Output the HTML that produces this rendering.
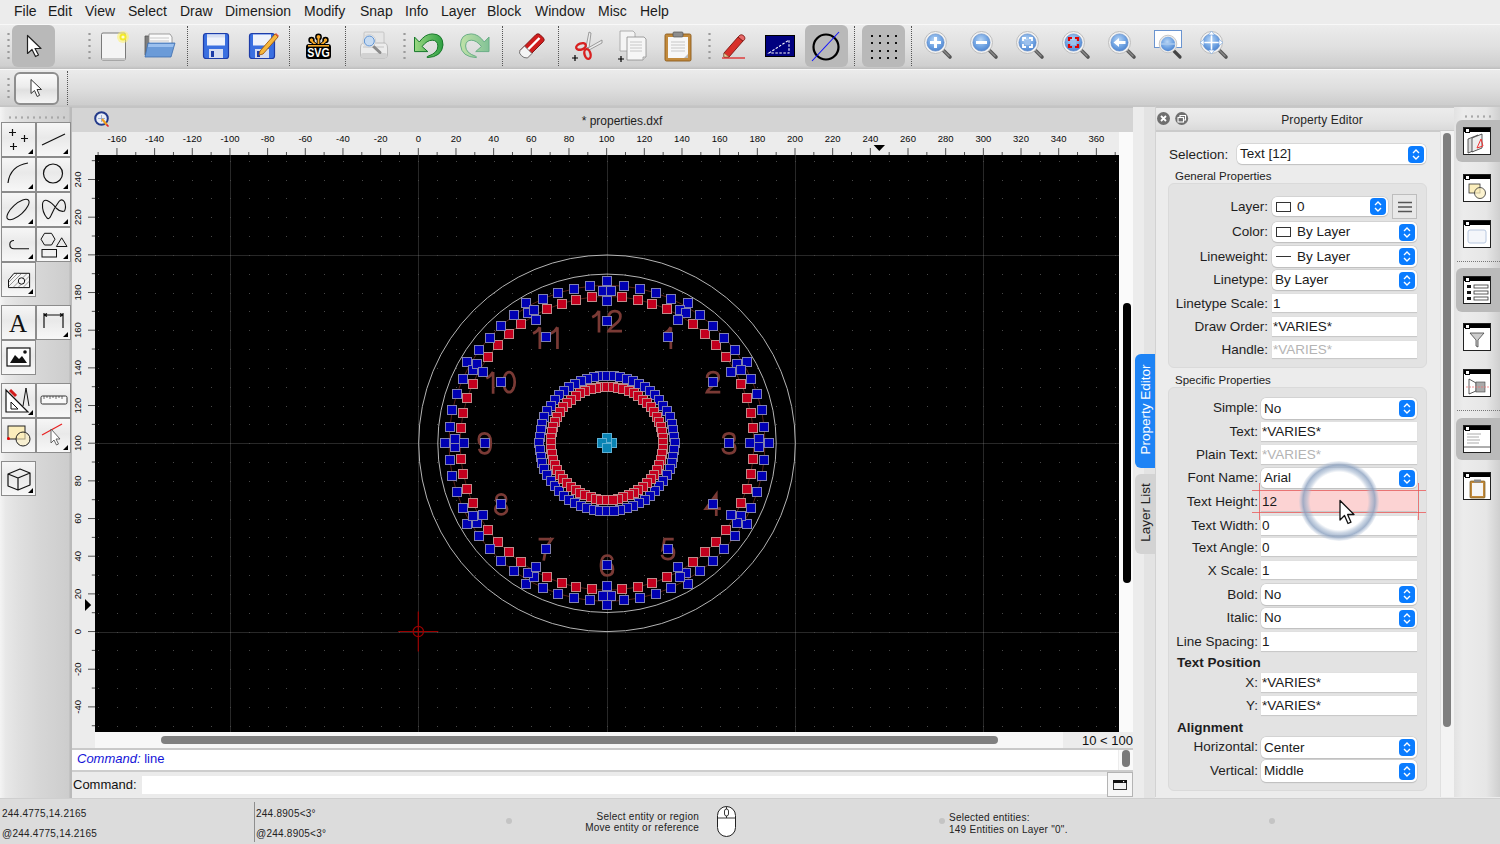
<!DOCTYPE html>
<html><head><meta charset="utf-8">
<style>
*{box-sizing:border-box}
html,body{margin:0;padding:0}
body{width:1500px;height:844px;overflow:hidden;position:relative;background:#ececec;font-family:"Liberation Sans",sans-serif;color:#1d1d1d}
.a{position:absolute}
#menubar{left:0;top:0;width:1500px;height:24px;background:#ececec}
#menubar span{position:absolute;top:3.2px;font-size:14px;color:#1b1b1b;letter-spacing:0}
#tb1{left:0;top:24px;width:1500px;height:45px;background:linear-gradient(#ececec,#e0e0e0 50%,#cfcfcf 93%,#bdbdbd);border-top:1px solid #f8f8f8}
#tb2{left:0;top:69px;width:1500px;height:38px;background:linear-gradient(#ebebeb,#dedede 50%,#cdcdcd 94%,#bababa);border-top:1px solid #f8f8f8}
.sepv{position:absolute;width:1px;border-left:1px dotted #555}
.handle{position:absolute;width:3px;background:radial-gradient(circle,#9a9a9a 1px,transparent 1.3px) 0 0/3px 6px}
.selbg{position:absolute;background:#b9b9b9;border-radius:6px}
#toolbox{left:0;top:106px;width:72px;height:692px;background:linear-gradient(90deg,#f4f4f4 0,#e8e8e8 8%,#e0e0e0 25%,#d6d6d6 55%,#cdcdcd 96%,#bababa 97%,#bababa);border-top:1px solid #c4c4c4}
.tbtn{position:absolute;width:35px;height:35px;border:1px solid #8c8c8c;background:linear-gradient(#f6f6f6,#e9e9e9 45%,#ececec 55%,#f7f7f7)}
.tri{position:absolute;right:2px;bottom:2px;width:0;height:0;border-left:5px solid transparent;border-bottom:5px solid #000}
#doctitle{left:72px;top:106px;width:1062px;height:26px;background:#d4d4d4;border-top:2px solid #c4c4c4}
#status{left:0;width:1500px;background:#dcdcdc;border-top:1px solid #cfcfcf}
.st{position:absolute;font-size:10px;color:#222;white-space:nowrap;letter-spacing:.25px}
.pe-lbl{position:absolute;font-size:13.5px;color:#1e1e1e;text-align:right;white-space:nowrap}
.field{position:absolute;height:19px;background:#fff;border-bottom:1px solid #c9c9c9;font-size:13.5px;padding-left:1px;line-height:19px;color:#1a1a1a;white-space:nowrap;box-shadow:0 0 0 0.5px #dedede}
.combo{position:absolute;height:21px;background:#fff;border-radius:5px;box-shadow:0 0 0 0.5px #c8c8c8,0 0.5px 1px rgba(0,0,0,.2);font-size:13.5px;line-height:21px;padding-left:3px;color:#1a1a1a;white-space:nowrap}
.cbtn{position:absolute;right:2px;top:2px;width:16px;height:17px;border-radius:4px;background:#0a7cff}
.cbtn svg{position:absolute;left:3px;top:2px}
.dockic{position:absolute;width:28px;height:28px;border:1px solid #222;background:#fff}
.dockic:before{content:"";position:absolute;left:0;top:0;right:0;height:4px;background:#000}
.dockic:after{content:"";position:absolute;left:1px;top:0;width:3px;height:3px;background:#fff;border:0.5px solid #000}
</style></head><body>
<div id="menubar" class="a">
<span style="left:14px">File</span><span style="left:48px">Edit</span><span style="left:85px">View</span><span style="left:128px">Select</span><span style="left:180px">Draw</span><span style="left:225px">Dimension</span><span style="left:304px">Modify</span><span style="left:360px">Snap</span><span style="left:405px">Info</span><span style="left:441px">Layer</span><span style="left:487px">Block</span><span style="left:535px">Window</span><span style="left:598px">Misc</span><span style="left:640px">Help</span>
</div>
<div id="tb1" class="a"></div>
<div id="tb2" class="a"></div>
<!-- toolbar 1 contents -->
<div class="handle" style="left:7px;top:31px;height:30px"></div>
<div class="selbg" style="left:12px;top:25px;width:43px;height:42px"></div>
<svg class="a" style="left:24px;top:34px" width="20" height="24" viewBox="0 0 20 24"><path d="M3.5 1.5V19.5L8 15.5L11.5 22.5L14.5 21L11 14.5H17z" fill="#fff" stroke="#222" stroke-width="1.2" stroke-linejoin="round"/></svg>
<div class="handle" style="left:88px;top:31px;height:30px"></div>
<!-- new doc -->
<svg class="a" style="left:99px;top:30px" width="30" height="32" viewBox="0 0 30 32"><rect x="2.5" y="3" width="24" height="27" rx="1.5" fill="#f4f4f4" stroke="#7a7a7a" stroke-width="1"/><rect x="3" y="28" width="23" height="2" fill="#c9c9c9"/><circle cx="24" cy="7" r="6" fill="#fff36a" opacity=".55"/><circle cx="24" cy="7" r="3.5" fill="#f3ea2a"/><circle cx="24" cy="7" r="1.6" fill="#fffbd0"/></svg>
<!-- open -->
<svg class="a" style="left:143px;top:31px" width="34" height="28" viewBox="0 0 34 28"><path d="M2 5H10L12 7H27V24H2z" fill="#7d7d7d" stroke="#555" stroke-width=".8"/><path d="M6 3H27L29 6V20H6z" fill="#fafafa" stroke="#8a8a8a" stroke-width=".8"/><path d="M7 7H26M7 10H26M7 13H26" stroke="#bbb" stroke-width=".8"/><path d="M5 12H32L28 26H2z" fill="#6b9bd8" stroke="#3f6faf" stroke-width=".8"/><path d="M5.5 13H31L30 16H5z" fill="#9bc0ee"/></svg>
<div class="sepv" style="left:187px;top:26px;height:40px"></div>
<!-- save -->
<svg class="a" style="left:202px;top:32px" width="28" height="28" viewBox="0 0 28 28"><rect x="1.5" y="1.5" width="25" height="25" rx="2.5" fill="#3a6fe0" stroke="#1d3ca8" stroke-width="1.2"/><rect x="5" y="2.5" width="18" height="11" fill="#eef2fb"/><rect x="5" y="2.5" width="18" height="3" fill="#d6def2"/><rect x="7" y="17" width="14" height="9" fill="#d5dcf0"/><rect x="9" y="19" width="3" height="6" fill="#1d3ca8"/></svg>
<!-- save as -->
<svg class="a" style="left:248px;top:30px" width="32" height="30" viewBox="0 0 32 30"><rect x="1.5" y="3.5" width="25" height="25" rx="2.5" fill="#3a6fe0" stroke="#1d3ca8" stroke-width="1.2"/><rect x="5" y="4.5" width="18" height="11" fill="#eef2fb"/><rect x="7" y="19" width="14" height="9" fill="#d5dcf0"/><rect x="9" y="21" width="3" height="6" fill="#1d3ca8"/><path d="M12 21L27 4L30 7L15 24L11 25z" fill="#f6b73c" stroke="#a05a10" stroke-width=".9"/><path d="M27 4L30 7L31 6L28 3z" fill="#e35a3a"/></svg>
<div class="sepv" style="left:289px;top:26px;height:40px"></div>
<!-- svg -->
<svg class="a" style="left:305px;top:33px" width="27" height="27" viewBox="0 0 27 27"><g fill="#f6a92a" stroke="#000" stroke-width="1.6"><circle cx="13.5" cy="4" r="2.6"/><circle cx="6.5" cy="7" r="2.4"/><circle cx="20.5" cy="7" r="2.4"/><path d="M13.5 5V12M6.5 8L11 12M20.5 8L16 12" stroke-width="3.6"/></g><path d="M13.5 5V12M6.5 8L11 12M20.5 8L16 12" stroke="#f6a92a" stroke-width="1.8"/><circle cx="13.5" cy="4" r="1.8" fill="#f6a92a"/><circle cx="6.5" cy="7" r="1.6" fill="#f6a92a"/><circle cx="20.5" cy="7" r="1.6" fill="#f6a92a"/><rect x="1" y="11" width="25" height="15" rx="3" fill="#000"/><rect x="3" y="12" width="21" height="1.6" fill="#f6a92a"/><text x="13.5" y="24.5" text-anchor="middle" font-family="Liberation Sans" font-weight="bold" font-size="13" fill="#fff" transform="translate(13.5 0) scale(.82 1) translate(-13.5 0)">SVG</text></svg>
<div class="sepv" style="left:345px;top:26px;height:40px"></div>
<!-- print preview -->
<svg class="a" style="left:359px;top:31px" width="31" height="29" viewBox="0 0 31 29"><rect x="5" y="1" width="20" height="14" rx="1" fill="#e6e6e6" stroke="#bdbdbd" stroke-width=".8"/><path d="M1.5 17Q1.5 12 5 12H25Q28.5 12 28.5 17V24Q28.5 27 25.5 27H4.5Q1.5 27 1.5 24z" fill="#ececec" stroke="#b0b0b0" stroke-width=".8"/><rect x="2" y="22" width="26" height="5" rx="2" fill="#d2d2d2"/><path d="M4 16H25" stroke="#c4c4c4" stroke-width="1"/><path d="M14 15L21 21.5" stroke="#8a8a8a" stroke-width="3" stroke-linecap="round"/><circle cx="10.3" cy="10" r="6.4" fill="#f4f4f4" stroke="#d0d0d0" stroke-width="1"/><circle cx="10.3" cy="10" r="5" fill="#c6dbf2" stroke="#5a8fd0" stroke-width="1"/></svg>
<div class="handle" style="left:403px;top:31px;height:30px"></div>
<!-- undo -->
<svg class="a" style="left:413px;top:32px" width="32" height="28" viewBox="0 0 32 28"><defs><linearGradient id="ug" x1="0" x2="1"><stop offset="0" stop-color="#9ad882"/><stop offset="1" stop-color="#2fa043"/></linearGradient></defs><path d="M1.5 5L6.3 10Q12 2 19.2 1.9Q30 2 30 13Q29 25 14.2 25.6Q13.6 24.6 14.8 24.3Q24.9 21 24.9 14Q24.5 8.2 19.2 8.2Q14 8.2 9.1 14.5L14.8 19.6H1.5Z" fill="url(#ug)" stroke="#17782a" stroke-width="1"/></svg>
<!-- redo -->
<svg class="a" style="left:459px;top:32px" width="32" height="28" viewBox="0 0 32 28"><defs><linearGradient id="rg2" x1="1" x2="0"><stop offset="0" stop-color="#c0e2a8"/><stop offset="1" stop-color="#82c296"/></linearGradient></defs><g transform="translate(31.5 0) scale(-1 1)"><path d="M1.5 5L6.3 10Q12 2 19.2 1.9Q30 2 30 13Q29 25 14.2 25.6Q13.6 24.6 14.8 24.3Q24.9 21 24.9 14Q24.5 8.2 19.2 8.2Q14 8.2 9.1 14.5L14.8 19.6H1.5Z" fill="url(#rg2)" stroke="#6aae86" stroke-width="1"/></g></svg>
<div class="sepv" style="left:502px;top:26px;height:40px"></div>
<!-- eraser -->
<svg class="a" style="left:515px;top:31px" width="32" height="30" viewBox="0 0 32 30"><ellipse cx="17" cy="26.5" rx="12" ry="1.8" fill="#d8d8d8"/><path d="M5 19.5L21 3.5Q23 2 25 3.5L28.5 7Q30 9 28.5 10.5L12.5 26.5z" fill="#cf1d1d" stroke="#7a0f0f" stroke-width=".9"/><path d="M9 22.5L24.5 7" stroke="#fff" stroke-width="2.4"/><path d="M5 19.5L9.5 15L17 22.5L12.5 27L9 26.5Q6 25 4.5 22z" fill="#f4f4f4" stroke="#666" stroke-width=".9"/></svg>
<div class="sepv" style="left:558px;top:26px;height:40px"></div>
<!-- scissors -->
<svg class="a" style="left:572px;top:30px" width="32" height="32" viewBox="0 0 32 32"><path d="M14 17L17 2L19 3L17 18z" fill="#ececec" stroke="#888" stroke-width=".8"/><path d="M16 18L30 10L30 13L17 20z" fill="#ececec" stroke="#888" stroke-width=".8"/><ellipse cx="9" cy="16.5" rx="5" ry="3" fill="none" stroke="#d82020" stroke-width="2.4" transform="rotate(-20 9 16.5)"/><ellipse cx="15.5" cy="24" rx="3" ry="5" fill="none" stroke="#d82020" stroke-width="2.4" transform="rotate(-15 15.5 24)"/><path d="M3 25V31M0 28H6" stroke="#000" stroke-width="1.2"/></svg>
<!-- copy -->
<svg class="a" style="left:616px;top:29px" width="34" height="33" viewBox="0 0 34 33"><path d="M4 2H17L19 4V22H4z" fill="#f4f4f4" stroke="#a0a0a0" stroke-width=".8"/><path d="M11 8H28L30 10V28L27 31H11z" fill="#f6f6f6" stroke="#8a8a8a" stroke-width=".8"/><path d="M14 13H26M14 16H26M14 19H26M14 22H26" stroke="#bdbdbd" stroke-width=".8"/><path d="M27 31L27 28L30 28" fill="#ddd" stroke="#999" stroke-width=".8"/><path d="M5 27V33M2 30H8" stroke="#000" stroke-width="1.2"/></svg>
<!-- paste -->
<svg class="a" style="left:663px;top:30px" width="31" height="32" viewBox="0 0 31 32"><rect x="2" y="4" width="26" height="27" rx="1.5" fill="#c28a3c" stroke="#8a5a1c" stroke-width=".9"/><rect x="5" y="7" width="20" height="21" fill="#f7f7f7"/><path d="M8 12H22M8 15H22M8 18H22M8 21H22" stroke="#bbb" stroke-width=".8"/><rect x="10" y="2" width="10" height="5" rx="1" fill="#8d8d8d" stroke="#555" stroke-width=".7"/><path d="M25 24L25 28L21 28z" fill="#bbb"/></svg>
<div class="handle" style="left:708px;top:31px;height:30px"></div>
<!-- pencil -->
<svg class="a" style="left:721px;top:33px" width="26" height="26" viewBox="0 0 26 26"><path d="M3 20L17 4L22 8L8 24L3 24z" fill="#d8302a" stroke="#7a1410" stroke-width=".9"/><path d="M17 4L19 2Q21 1 23 3L24 5Q24 7 22 8z" fill="#e86a6a" stroke="#7a1410" stroke-width=".8"/><path d="M3 20L8 24L3 24z" fill="#f2d0a0" stroke="#7a5a30" stroke-width=".6"/><path d="M1 25H24" stroke="#e01818" stroke-width="1.2"/></svg>
<!-- dimension box -->
<svg class="a" style="left:764px;top:34px" width="32" height="24" viewBox="0 0 32 24"><rect x="1.5" y="1.5" width="29" height="21" fill="#00007f" stroke="#000" stroke-width="1"/><path d="M5 19L25 6V19z" fill="none" stroke="#fff" stroke-width="1.1" stroke-dasharray="2.5 1.5"/></svg>
<div class="selbg" style="left:805px;top:25px;width:43px;height:42px"></div>
<svg class="a" style="left:810px;top:30px" width="32" height="32" viewBox="0 0 32 32"><circle cx="16" cy="17" r="12.5" fill="none" stroke="#000" stroke-width="2.2"/><path d="M2 31L29 2" stroke="#1010ff" stroke-width="1.1"/></svg>
<div class="sepv" style="left:854px;top:26px;height:40px"></div>
<div class="selbg" style="left:862px;top:25px;width:43px;height:42px"></div>
<svg class="a" style="left:869px;top:32px" width="28" height="28" viewBox="0 0 28 28"><g fill="#111"><rect x="2" y="3" width="2" height="2"/><rect x="10" y="3" width="2" height="2"/><rect x="18" y="3" width="2" height="2"/><rect x="26" y="3" width="2" height="2"/><rect x="2" y="10" width="2" height="2"/><rect x="10" y="10" width="2" height="2"/><rect x="18" y="10" width="2" height="2"/><rect x="26" y="10" width="2" height="2"/><rect x="2" y="18" width="2" height="2"/><rect x="10" y="18" width="2" height="2"/><rect x="18" y="18" width="2" height="2"/><rect x="26" y="18" width="2" height="2"/><rect x="2" y="25" width="2" height="2"/><rect x="10" y="25" width="2" height="2"/><rect x="18" y="25" width="2" height="2"/><rect x="26" y="25" width="2" height="2"/></g></svg>
<div class="sepv" style="left:911px;top:26px;height:40px"></div>
<svg class="a" style="left:923px;top:30px" width="32" height="32" viewBox="0 0 32 32"><defs><radialGradient id="lg" cx=".45" cy=".35" r=".7"><stop offset="0" stop-color="#b9d6f5"/><stop offset=".6" stop-color="#6ea2e2"/><stop offset="1" stop-color="#4a80cc"/></radialGradient></defs><path d="M19 19L27 27" stroke="#555" stroke-width="3.6" stroke-linecap="round"/><path d="M20 20L26 26" stroke="#8a8a8a" stroke-width="1.4" stroke-linecap="round"/><circle cx="12.5" cy="12.5" r="11" fill="#f2f2f2" stroke="#bdbdbd" stroke-width="1"/><circle cx="12.5" cy="12.5" r="8.6" fill="url(#lg)" stroke="#5b87c4" stroke-width=".6"/><path d="M12.5 7V18M7 12.5H18" stroke="#fff" stroke-width="3"/></svg>
<svg class="a" style="left:969px;top:30px" width="32" height="32" viewBox="0 0 32 32"><defs><radialGradient id="lg" cx=".45" cy=".35" r=".7"><stop offset="0" stop-color="#b9d6f5"/><stop offset=".6" stop-color="#6ea2e2"/><stop offset="1" stop-color="#4a80cc"/></radialGradient></defs><path d="M19 19L27 27" stroke="#555" stroke-width="3.6" stroke-linecap="round"/><path d="M20 20L26 26" stroke="#8a8a8a" stroke-width="1.4" stroke-linecap="round"/><circle cx="12.5" cy="12.5" r="11" fill="#f2f2f2" stroke="#bdbdbd" stroke-width="1"/><circle cx="12.5" cy="12.5" r="8.6" fill="url(#lg)" stroke="#5b87c4" stroke-width=".6"/><path d="M7 12.5H18" stroke="#fff" stroke-width="3"/></svg>
<svg class="a" style="left:1015px;top:30px" width="32" height="32" viewBox="0 0 32 32"><defs><radialGradient id="lg" cx=".45" cy=".35" r=".7"><stop offset="0" stop-color="#b9d6f5"/><stop offset=".6" stop-color="#6ea2e2"/><stop offset="1" stop-color="#4a80cc"/></radialGradient></defs><path d="M19 19L27 27" stroke="#555" stroke-width="3.6" stroke-linecap="round"/><path d="M20 20L26 26" stroke="#8a8a8a" stroke-width="1.4" stroke-linecap="round"/><circle cx="12.5" cy="12.5" r="11" fill="#f2f2f2" stroke="#bdbdbd" stroke-width="1"/><circle cx="12.5" cy="12.5" r="8.6" fill="url(#lg)" stroke="#5b87c4" stroke-width=".6"/><path d="M8 11V8H11M14 8H17V11M17 14V17H14M11 17H8V14" fill="none" stroke="#fff" stroke-width="1.8"/><rect x="10" y="10" width="5" height="5" fill="#9cc0ec"/></svg>
<svg class="a" style="left:1061px;top:30px" width="32" height="32" viewBox="0 0 32 32"><defs><radialGradient id="lg" cx=".45" cy=".35" r=".7"><stop offset="0" stop-color="#b9d6f5"/><stop offset=".6" stop-color="#6ea2e2"/><stop offset="1" stop-color="#4a80cc"/></radialGradient></defs><path d="M19 19L27 27" stroke="#555" stroke-width="3.6" stroke-linecap="round"/><path d="M20 20L26 26" stroke="#8a8a8a" stroke-width="1.4" stroke-linecap="round"/><circle cx="12.5" cy="12.5" r="11" fill="#f2f2f2" stroke="#bdbdbd" stroke-width="1"/><circle cx="12.5" cy="12.5" r="8.6" fill="url(#lg)" stroke="#5b87c4" stroke-width=".6"/><path d="M8 11V8H11M14 8H17V11M17 14V17H14M11 17H8V14" fill="none" stroke="#e00000" stroke-width="2.2"/><rect x="10" y="10" width="5" height="5" fill="#9cc0ec"/></svg>
<svg class="a" style="left:1107px;top:30px" width="32" height="32" viewBox="0 0 32 32"><defs><radialGradient id="lg" cx=".45" cy=".35" r=".7"><stop offset="0" stop-color="#b9d6f5"/><stop offset=".6" stop-color="#6ea2e2"/><stop offset="1" stop-color="#4a80cc"/></radialGradient></defs><path d="M19 19L27 27" stroke="#555" stroke-width="3.6" stroke-linecap="round"/><path d="M20 20L26 26" stroke="#8a8a8a" stroke-width="1.4" stroke-linecap="round"/><circle cx="12.5" cy="12.5" r="11" fill="#f2f2f2" stroke="#bdbdbd" stroke-width="1"/><circle cx="12.5" cy="12.5" r="8.6" fill="url(#lg)" stroke="#5b87c4" stroke-width=".6"/><path d="M6.5 12.5L12 8V11H18.5V14H12V17z" fill="#fff"/></svg>
<svg class="a" style="left:1153px;top:29px" width="32" height="32" viewBox="0 0 32 32"><defs><radialGradient id="lg" cx=".45" cy=".35" r=".7"><stop offset="0" stop-color="#b9d6f5"/><stop offset=".6" stop-color="#6ea2e2"/><stop offset="1" stop-color="#4a80cc"/></radialGradient></defs><rect x="1.5" y="1.5" width="27" height="17" fill="#fff" stroke="#6a94d0" stroke-width="1"/><path d="M20 21L27 28" stroke="#444" stroke-width="3.2" stroke-linecap="round"/><circle cx="15" cy="15" r="8.8" fill="#ececec" stroke="#c8c8c8" stroke-width="1"/><circle cx="15" cy="15" r="7.2" fill="url(#lg)"/><path d="M8 15H22" stroke="#a9c8ee" stroke-width="1.5"/></svg>
<svg class="a" style="left:1199px;top:30px" width="32" height="32" viewBox="0 0 32 32"><defs><radialGradient id="lg" cx=".45" cy=".35" r=".7"><stop offset="0" stop-color="#b9d6f5"/><stop offset=".6" stop-color="#6ea2e2"/><stop offset="1" stop-color="#4a80cc"/></radialGradient></defs><path d="M19 19L27 27" stroke="#555" stroke-width="3.6" stroke-linecap="round"/><path d="M20 20L26 26" stroke="#8a8a8a" stroke-width="1.4" stroke-linecap="round"/><circle cx="12.5" cy="12.5" r="11" fill="#f2f2f2" stroke="#bdbdbd" stroke-width="1"/><circle cx="12.5" cy="12.5" r="8.6" fill="url(#lg)" stroke="#5b87c4" stroke-width=".6"/><path d="M12.5 2V23M2 12.5H23" stroke="#fff" stroke-width="1.6"/><path d="M12.5 1L9.5 5H15.5zM12.5 24L9.5 20H15.5zM1 12.5L5 9.5V15.5zM24 12.5L20 9.5V15.5z" fill="#fff" stroke="#6ea2e2" stroke-width=".6"/></svg>
<div class="handle" style="left:7px;top:76px;height:24px"></div>
<div class="a" style="left:14px;top:72px;width:45px;height:33px;border:2px solid #8e8e8e;border-radius:6px;background:linear-gradient(#fafafa,#ececec 45%,#e0e0e0 55%,#f4f4f4)"></div>
<svg class="a" style="left:28px;top:78px" width="16" height="20" viewBox="0 0 16 20"><path d="M3 1.5V15.5L6.5 12.5L9.2 18.5L11.6 17.3L9 11.5H13.5z" fill="#fff" stroke="#333" stroke-width="1" stroke-linejoin="round"/></svg>
<div class="sepv" style="left:67px;top:71px;height:34px"></div><div id="toolbox" class="a"></div>
<div class="a" style="left:7px;top:116px;width:58px;height:3px;background:radial-gradient(circle,#a8a8a8 1px,transparent 1.3px) 0 0/6px 3px"></div>
<div class="tbtn" style="left:1px;top:122px"><svg class="a" style="left:0;top:0" width="33" height="33" viewBox="0 0 33 33"><path d="M7 9.5H14M10.5 6V13M19 15.5H26M22.5 12V19M8 23.5H15M11.5 20V27" stroke="#111" fill="none" stroke-width="1.2"/></svg><div class="tri"></div></div>
<div class="tbtn" style="left:36px;top:122px"><svg class="a" style="left:0;top:0" width="33" height="33" viewBox="0 0 33 33"><path d="M5 22L28 11" stroke="#111" fill="none" stroke-width="1.2"/></svg><div class="tri"></div></div>
<div class="tbtn" style="left:1px;top:157px"><svg class="a" style="left:0;top:0" width="33" height="33" viewBox="0 0 33 33"><path d="M6 25Q8 8 26 5" stroke="#111" fill="none" stroke-width="1.2"/></svg><div class="tri"></div></div>
<div class="tbtn" style="left:36px;top:157px"><svg class="a" style="left:0;top:0" width="33" height="33" viewBox="0 0 33 33"><circle cx="16" cy="15.5" r="9.5" stroke="#111" fill="none" stroke-width="1.2"/></svg><div class="tri"></div></div>
<div class="tbtn" style="left:1px;top:192px"><svg class="a" style="left:0;top:0" width="33" height="33" viewBox="0 0 33 33"><ellipse cx="16" cy="16.5" rx="14" ry="5.6" transform="rotate(-42 16 16.5)" stroke="#111" fill="none" stroke-width="1.1"/></svg><div class="tri"></div></div>
<div class="tbtn" style="left:36px;top:192px"><svg class="a" style="left:0;top:0" width="33" height="33" viewBox="0 0 33 33"><path d="M5.5 11Q6 6.5 10 7.5Q15 9.5 19 15Q23.5 19.5 27.5 18Q29.5 14 27.5 9Q25 5 22 8.5Q17 15 14 22.5Q12 27 10 25Q5 19 5.5 11" stroke="#111" fill="none" stroke-width="1.1"/></svg><div class="tri"></div></div>
<div class="tbtn" style="left:1px;top:227px"><svg class="a" style="left:0;top:0" width="33" height="33" viewBox="0 0 33 33"><path d="M12 12.5Q7.8 12.5 7.8 16.6Q7.8 20.8 12 20.8H27" stroke="#111" fill="none" stroke-width="1.1"/></svg><div class="tri"></div></div>
<div class="tbtn" style="left:36px;top:227px"><svg class="a" style="left:0;top:0" width="33" height="33" viewBox="0 0 33 33"><path d="M4 11.2L7.5 5.3H14.5L18 11.2L14.5 17H7.5z M24.7 9.8L30 18.5H19.4z" stroke="#111" fill="none" stroke-width="1"/><rect x="5" y="21.5" width="14.5" height="7.5" stroke="#111" fill="none" stroke-width="1"/></svg><div class="tri"></div></div>
<div class="tbtn" style="left:1px;top:262px"><svg class="a" style="left:0;top:0" width="33" height="33" viewBox="0 0 33 33"><path d="M6.5 17L12 10.3H27.6V24.6H6.5z" fill="#f4f4f4" stroke="#111" stroke-width="1"/><path d="M7 23L19 11M7 19L15 11M11 24.5L24.5 11M16 24.5L27.5 13M21 24.5L27.5 18" stroke="#555" stroke-width=".6"/><circle cx="19.5" cy="18" r="3.2" fill="#f4f4f4" stroke="#111"/></svg><div class="tri"></div></div>
<div class="tbtn" style="left:1px;top:305px"><svg class="a" style="left:0;top:0" width="33" height="33" viewBox="0 0 33 33"><text x="16" y="26" text-anchor="middle" font-family="Liberation Serif" font-size="25" fill="#111">A</text></svg></div>
<div class="tbtn" style="left:36px;top:305px"><svg class="a" style="left:0;top:0" width="33" height="33" viewBox="0 0 33 33"><path d="M7 7V22M26 7V22M7 9H26M7 9L10 7.5M7 9L10 10.5M26 9L23 7.5M26 9L23 10.5" stroke="#111" fill="none" stroke-width="1.2"/></svg><div class="tri"></div></div>
<div class="tbtn" style="left:1px;top:340px"><svg class="a" style="left:0;top:0" width="33" height="33" viewBox="0 0 33 33"><rect x="5" y="7" width="23" height="18" fill="#fff" stroke="#111" stroke-width="1.2"/><path d="M8 22L13 14L17 18L20 15L25 22z" fill="#111"/><circle cx="23" cy="11" r="1.8" fill="#111"/></svg></div>
<div class="tbtn" style="left:1px;top:383px"><svg class="a" style="left:0;top:0" width="33" height="33" viewBox="0 0 33 33"><path d="M4 28V6L26 28z" fill="#fff" stroke="#111" stroke-width="1.2"/><path d="M9 25V18L16 25z" fill="none" stroke="#111" stroke-width="1"/><path d="M8 6L14 12" stroke="#d21d1d" stroke-width="3"/><path d="M24 4L21 22M24 4L27 22" stroke="#111" stroke-width="1"/></svg><div class="tri"></div></div>
<div class="tbtn" style="left:36px;top:383px"><svg class="a" style="left:0;top:0" width="33" height="33" viewBox="0 0 33 33"><rect x="4" y="12" width="26" height="8" rx="1.5" fill="#f8f8f8" stroke="#333" stroke-width="1"/><path d="M7 12V15M10 12V14M13 12V15M16 12V14M19 12V15M22 12V14M25 12V15" stroke="#333" stroke-width=".7"/></svg></div>
<div class="tbtn" style="left:1px;top:418px"><svg class="a" style="left:0;top:0" width="33" height="33" viewBox="0 0 33 33"><rect x="6" y="7" width="17" height="13" fill="#fbeebc" stroke="#222" stroke-width="1"/><circle cx="21" cy="20" r="7" fill="#fbeebc" fill-opacity=".6" stroke="#222" stroke-width="1"/><circle cx="6.5" cy="19.5" r="1.5" fill="#e00"/></svg></div>
<div class="tbtn" style="left:36px;top:418px"><svg class="a" style="left:0;top:0" width="33" height="33" viewBox="0 0 33 33"><path d="M5 16L25 5" stroke="#e82020" stroke-width="1.2"/><path d="M14 10V24L17 21L19.5 26L21.5 25L19 20H23z" fill="#fff" stroke="#555" stroke-width=".9"/></svg><div class="tri"></div></div>
<div class="tbtn" style="left:1px;top:461px"><svg class="a" style="left:0;top:0" width="33" height="33" viewBox="0 0 33 33"><path d="M6 12L18 7L28 11V23L16 28L6 24z M6 12L16 16L28 11M16 16V28" stroke="#111" fill="none" stroke-width="1.2" stroke-linejoin="round"/></svg><div class="tri"></div></div><div id="doctitle" class="a"></div>
<svg class="a" style="left:94px;top:111px" width="16" height="16" viewBox="0 0 16 16"><circle cx="7.5" cy="7.5" r="6.3" fill="#e9eef7" stroke="#233a8a" stroke-width="2"/><path d="M4 7.5H11M7.5 4V11" stroke="#8aa0c8" stroke-width=".8"/><path d="M8 8L13 14" stroke="#f0a020" stroke-width="2.2"/><path d="M12.5 13.5L14.5 15.5" stroke="#d23" stroke-width="1.6"/></svg>
<div class="a" style="left:539px;top:113.5px;width:166px;text-align:center;font-size:12px;color:#1e1e1e">* properties.dxf</div>
<svg width="1047" height="23" viewBox="72 132 1047 23" style="position:absolute;left:72px;top:132px">
<rect x="72" y="132" width="1047" height="23" fill="#ececec"/>
<path d="M98.11 152V155M116.94 148V155M135.78 152V155M154.61 148V155M173.45 152V155M192.28 148V155M211.12 152V155M229.95 148V155M248.79 152V155M267.62 148V155M286.46 152V155M305.29 148V155M324.12 152V155M342.96 148V155M361.80 152V155M380.63 148V155M399.47 152V155M418.30 148V155M437.13 152V155M455.97 148V155M474.81 152V155M493.64 148V155M512.48 152V155M531.31 148V155M550.14 152V155M568.98 148V155M587.82 152V155M606.65 148V155M625.49 152V155M644.32 148V155M663.15 152V155M681.99 148V155M700.83 152V155M719.66 148V155M738.50 152V155M757.33 148V155M776.16 152V155M795.00 148V155M813.84 152V155M832.67 148V155M851.50 152V155M870.34 148V155M889.17 152V155M908.01 148V155M926.85 152V155M945.68 148V155M964.52 152V155M983.35 148V155M1002.18 152V155M1021.02 148V155M1039.86 152V155M1058.69 148V155M1077.53 152V155M1096.36 148V155M1115.19 152V155" stroke="#505050" stroke-width="1"/>
<g font-family="Liberation Sans" font-size="9.5" fill="#0a0a0a"><text x="116.94" y="141.8" text-anchor="middle">-160</text><text x="154.61" y="141.8" text-anchor="middle">-140</text><text x="192.28" y="141.8" text-anchor="middle">-120</text><text x="229.95" y="141.8" text-anchor="middle">-100</text><text x="267.62" y="141.8" text-anchor="middle">-80</text><text x="305.29" y="141.8" text-anchor="middle">-60</text><text x="342.96" y="141.8" text-anchor="middle">-40</text><text x="380.63" y="141.8" text-anchor="middle">-20</text><text x="418.30" y="141.8" text-anchor="middle">0</text><text x="455.97" y="141.8" text-anchor="middle">20</text><text x="493.64" y="141.8" text-anchor="middle">40</text><text x="531.31" y="141.8" text-anchor="middle">60</text><text x="568.98" y="141.8" text-anchor="middle">80</text><text x="606.65" y="141.8" text-anchor="middle">100</text><text x="644.32" y="141.8" text-anchor="middle">120</text><text x="681.99" y="141.8" text-anchor="middle">140</text><text x="719.66" y="141.8" text-anchor="middle">160</text><text x="757.33" y="141.8" text-anchor="middle">180</text><text x="795.00" y="141.8" text-anchor="middle">200</text><text x="832.67" y="141.8" text-anchor="middle">220</text><text x="870.34" y="141.8" text-anchor="middle">240</text><text x="908.01" y="141.8" text-anchor="middle">260</text><text x="945.68" y="141.8" text-anchor="middle">280</text><text x="983.35" y="141.8" text-anchor="middle">300</text><text x="1021.02" y="141.8" text-anchor="middle">320</text><text x="1058.69" y="141.8" text-anchor="middle">340</text><text x="1096.36" y="141.8" text-anchor="middle">360</text></g>
<path d="M873.6 145H885L879.3 151z" fill="#000"/>
</svg>
<svg width="23" height="577" viewBox="72 155 23 577" style="position:absolute;left:72px;top:155px">
<rect x="72" y="155" width="23" height="577" fill="#ececec"/>
<path d="M91.8 725.72H95M88 706.89H95M91.8 688.05H95M88 669.22H95M91.8 650.38H95M88 631.55H95M91.8 612.71H95M88 593.88H95M91.8 575.04H95M88 556.21H95M91.8 537.38H95M88 518.54H95M91.8 499.70H95M88 480.87H95M91.8 462.03H95M88 443.20H95M91.8 424.36H95M88 405.53H95M91.8 386.69H95M88 367.86H95M91.8 349.02H95M88 330.19H95M91.8 311.35H95M88 292.52H95M91.8 273.68H95M88 254.85H95M91.8 236.01H95M88 217.18H95M91.8 198.34H95M88 179.51H95M91.8 160.67H95" stroke="#505050" stroke-width="1"/>
<g font-family="Liberation Sans" font-size="9.5" fill="#0a0a0a"><text transform="translate(81.2 706.89) rotate(-90)" text-anchor="middle">-40</text><text transform="translate(81.2 669.22) rotate(-90)" text-anchor="middle">-20</text><text transform="translate(81.2 631.55) rotate(-90)" text-anchor="middle">0</text><text transform="translate(81.2 593.88) rotate(-90)" text-anchor="middle">20</text><text transform="translate(81.2 556.21) rotate(-90)" text-anchor="middle">40</text><text transform="translate(81.2 518.54) rotate(-90)" text-anchor="middle">60</text><text transform="translate(81.2 480.87) rotate(-90)" text-anchor="middle">80</text><text transform="translate(81.2 443.20) rotate(-90)" text-anchor="middle">100</text><text transform="translate(81.2 405.53) rotate(-90)" text-anchor="middle">120</text><text transform="translate(81.2 367.86) rotate(-90)" text-anchor="middle">140</text><text transform="translate(81.2 330.19) rotate(-90)" text-anchor="middle">160</text><text transform="translate(81.2 292.52) rotate(-90)" text-anchor="middle">180</text><text transform="translate(81.2 254.85) rotate(-90)" text-anchor="middle">200</text><text transform="translate(81.2 217.18) rotate(-90)" text-anchor="middle">220</text><text transform="translate(81.2 179.51) rotate(-90)" text-anchor="middle">240</text></g>
<path d="M85 599V611L91.2 605z" fill="#000"/>
</svg>
<svg width="1024" height="577" viewBox="95 155 1024 577" style="position:absolute;left:95px;top:155px;display:block">
<rect x="95" y="155" width="1024" height="577" fill="#000"/>
<path d="M230.5 155V732M418.5 155V732M607.5 155V732M795.5 155V732M983.5 155V732M95 632.5H1119M95 443.5H1119M95 255.5H1119" stroke="#282828" stroke-width="1" fill="none"/>
<path d="M98 726h1v1h-1zM98 707h1v1h-1zM98 688h1v1h-1zM98 669h1v1h-1zM98 650h1v1h-1zM98 632h1v1h-1zM98 613h1v1h-1zM98 594h1v1h-1zM98 575h1v1h-1zM98 556h1v1h-1zM98 537h1v1h-1zM98 519h1v1h-1zM98 500h1v1h-1zM98 481h1v1h-1zM98 462h1v1h-1zM98 443h1v1h-1zM98 424h1v1h-1zM98 406h1v1h-1zM98 387h1v1h-1zM98 368h1v1h-1zM98 349h1v1h-1zM98 330h1v1h-1zM98 311h1v1h-1zM98 293h1v1h-1zM98 274h1v1h-1zM98 255h1v1h-1zM98 236h1v1h-1zM98 217h1v1h-1zM98 198h1v1h-1zM98 180h1v1h-1zM98 161h1v1h-1zM117 726h1v1h-1zM117 707h1v1h-1zM117 688h1v1h-1zM117 669h1v1h-1zM117 650h1v1h-1zM117 632h1v1h-1zM117 613h1v1h-1zM117 594h1v1h-1zM117 575h1v1h-1zM117 556h1v1h-1zM117 537h1v1h-1zM117 519h1v1h-1zM117 500h1v1h-1zM117 481h1v1h-1zM117 462h1v1h-1zM117 443h1v1h-1zM117 424h1v1h-1zM117 406h1v1h-1zM117 387h1v1h-1zM117 368h1v1h-1zM117 349h1v1h-1zM117 330h1v1h-1zM117 311h1v1h-1zM117 293h1v1h-1zM117 274h1v1h-1zM117 255h1v1h-1zM117 236h1v1h-1zM117 217h1v1h-1zM117 198h1v1h-1zM117 180h1v1h-1zM117 161h1v1h-1zM136 726h1v1h-1zM136 707h1v1h-1zM136 688h1v1h-1zM136 669h1v1h-1zM136 650h1v1h-1zM136 632h1v1h-1zM136 613h1v1h-1zM136 594h1v1h-1zM136 575h1v1h-1zM136 556h1v1h-1zM136 537h1v1h-1zM136 519h1v1h-1zM136 500h1v1h-1zM136 481h1v1h-1zM136 462h1v1h-1zM136 443h1v1h-1zM136 424h1v1h-1zM136 406h1v1h-1zM136 387h1v1h-1zM136 368h1v1h-1zM136 349h1v1h-1zM136 330h1v1h-1zM136 311h1v1h-1zM136 293h1v1h-1zM136 274h1v1h-1zM136 255h1v1h-1zM136 236h1v1h-1zM136 217h1v1h-1zM136 198h1v1h-1zM136 180h1v1h-1zM136 161h1v1h-1zM155 726h1v1h-1zM155 707h1v1h-1zM155 688h1v1h-1zM155 669h1v1h-1zM155 650h1v1h-1zM155 632h1v1h-1zM155 613h1v1h-1zM155 594h1v1h-1zM155 575h1v1h-1zM155 556h1v1h-1zM155 537h1v1h-1zM155 519h1v1h-1zM155 500h1v1h-1zM155 481h1v1h-1zM155 462h1v1h-1zM155 443h1v1h-1zM155 424h1v1h-1zM155 406h1v1h-1zM155 387h1v1h-1zM155 368h1v1h-1zM155 349h1v1h-1zM155 330h1v1h-1zM155 311h1v1h-1zM155 293h1v1h-1zM155 274h1v1h-1zM155 255h1v1h-1zM155 236h1v1h-1zM155 217h1v1h-1zM155 198h1v1h-1zM155 180h1v1h-1zM155 161h1v1h-1zM173 726h1v1h-1zM173 707h1v1h-1zM173 688h1v1h-1zM173 669h1v1h-1zM173 650h1v1h-1zM173 632h1v1h-1zM173 613h1v1h-1zM173 594h1v1h-1zM173 575h1v1h-1zM173 556h1v1h-1zM173 537h1v1h-1zM173 519h1v1h-1zM173 500h1v1h-1zM173 481h1v1h-1zM173 462h1v1h-1zM173 443h1v1h-1zM173 424h1v1h-1zM173 406h1v1h-1zM173 387h1v1h-1zM173 368h1v1h-1zM173 349h1v1h-1zM173 330h1v1h-1zM173 311h1v1h-1zM173 293h1v1h-1zM173 274h1v1h-1zM173 255h1v1h-1zM173 236h1v1h-1zM173 217h1v1h-1zM173 198h1v1h-1zM173 180h1v1h-1zM173 161h1v1h-1zM192 726h1v1h-1zM192 707h1v1h-1zM192 688h1v1h-1zM192 669h1v1h-1zM192 650h1v1h-1zM192 632h1v1h-1zM192 613h1v1h-1zM192 594h1v1h-1zM192 575h1v1h-1zM192 556h1v1h-1zM192 537h1v1h-1zM192 519h1v1h-1zM192 500h1v1h-1zM192 481h1v1h-1zM192 462h1v1h-1zM192 443h1v1h-1zM192 424h1v1h-1zM192 406h1v1h-1zM192 387h1v1h-1zM192 368h1v1h-1zM192 349h1v1h-1zM192 330h1v1h-1zM192 311h1v1h-1zM192 293h1v1h-1zM192 274h1v1h-1zM192 255h1v1h-1zM192 236h1v1h-1zM192 217h1v1h-1zM192 198h1v1h-1zM192 180h1v1h-1zM192 161h1v1h-1zM211 726h1v1h-1zM211 707h1v1h-1zM211 688h1v1h-1zM211 669h1v1h-1zM211 650h1v1h-1zM211 632h1v1h-1zM211 613h1v1h-1zM211 594h1v1h-1zM211 575h1v1h-1zM211 556h1v1h-1zM211 537h1v1h-1zM211 519h1v1h-1zM211 500h1v1h-1zM211 481h1v1h-1zM211 462h1v1h-1zM211 443h1v1h-1zM211 424h1v1h-1zM211 406h1v1h-1zM211 387h1v1h-1zM211 368h1v1h-1zM211 349h1v1h-1zM211 330h1v1h-1zM211 311h1v1h-1zM211 293h1v1h-1zM211 274h1v1h-1zM211 255h1v1h-1zM211 236h1v1h-1zM211 217h1v1h-1zM211 198h1v1h-1zM211 180h1v1h-1zM211 161h1v1h-1zM230 726h1v1h-1zM230 707h1v1h-1zM230 688h1v1h-1zM230 669h1v1h-1zM230 650h1v1h-1zM230 632h1v1h-1zM230 613h1v1h-1zM230 594h1v1h-1zM230 575h1v1h-1zM230 556h1v1h-1zM230 537h1v1h-1zM230 519h1v1h-1zM230 500h1v1h-1zM230 481h1v1h-1zM230 462h1v1h-1zM230 443h1v1h-1zM230 424h1v1h-1zM230 406h1v1h-1zM230 387h1v1h-1zM230 368h1v1h-1zM230 349h1v1h-1zM230 330h1v1h-1zM230 311h1v1h-1zM230 293h1v1h-1zM230 274h1v1h-1zM230 255h1v1h-1zM230 236h1v1h-1zM230 217h1v1h-1zM230 198h1v1h-1zM230 180h1v1h-1zM230 161h1v1h-1zM249 726h1v1h-1zM249 707h1v1h-1zM249 688h1v1h-1zM249 669h1v1h-1zM249 650h1v1h-1zM249 632h1v1h-1zM249 613h1v1h-1zM249 594h1v1h-1zM249 575h1v1h-1zM249 556h1v1h-1zM249 537h1v1h-1zM249 519h1v1h-1zM249 500h1v1h-1zM249 481h1v1h-1zM249 462h1v1h-1zM249 443h1v1h-1zM249 424h1v1h-1zM249 406h1v1h-1zM249 387h1v1h-1zM249 368h1v1h-1zM249 349h1v1h-1zM249 330h1v1h-1zM249 311h1v1h-1zM249 293h1v1h-1zM249 274h1v1h-1zM249 255h1v1h-1zM249 236h1v1h-1zM249 217h1v1h-1zM249 198h1v1h-1zM249 180h1v1h-1zM249 161h1v1h-1zM268 726h1v1h-1zM268 707h1v1h-1zM268 688h1v1h-1zM268 669h1v1h-1zM268 650h1v1h-1zM268 632h1v1h-1zM268 613h1v1h-1zM268 594h1v1h-1zM268 575h1v1h-1zM268 556h1v1h-1zM268 537h1v1h-1zM268 519h1v1h-1zM268 500h1v1h-1zM268 481h1v1h-1zM268 462h1v1h-1zM268 443h1v1h-1zM268 424h1v1h-1zM268 406h1v1h-1zM268 387h1v1h-1zM268 368h1v1h-1zM268 349h1v1h-1zM268 330h1v1h-1zM268 311h1v1h-1zM268 293h1v1h-1zM268 274h1v1h-1zM268 255h1v1h-1zM268 236h1v1h-1zM268 217h1v1h-1zM268 198h1v1h-1zM268 180h1v1h-1zM268 161h1v1h-1zM286 726h1v1h-1zM286 707h1v1h-1zM286 688h1v1h-1zM286 669h1v1h-1zM286 650h1v1h-1zM286 632h1v1h-1zM286 613h1v1h-1zM286 594h1v1h-1zM286 575h1v1h-1zM286 556h1v1h-1zM286 537h1v1h-1zM286 519h1v1h-1zM286 500h1v1h-1zM286 481h1v1h-1zM286 462h1v1h-1zM286 443h1v1h-1zM286 424h1v1h-1zM286 406h1v1h-1zM286 387h1v1h-1zM286 368h1v1h-1zM286 349h1v1h-1zM286 330h1v1h-1zM286 311h1v1h-1zM286 293h1v1h-1zM286 274h1v1h-1zM286 255h1v1h-1zM286 236h1v1h-1zM286 217h1v1h-1zM286 198h1v1h-1zM286 180h1v1h-1zM286 161h1v1h-1zM305 726h1v1h-1zM305 707h1v1h-1zM305 688h1v1h-1zM305 669h1v1h-1zM305 650h1v1h-1zM305 632h1v1h-1zM305 613h1v1h-1zM305 594h1v1h-1zM305 575h1v1h-1zM305 556h1v1h-1zM305 537h1v1h-1zM305 519h1v1h-1zM305 500h1v1h-1zM305 481h1v1h-1zM305 462h1v1h-1zM305 443h1v1h-1zM305 424h1v1h-1zM305 406h1v1h-1zM305 387h1v1h-1zM305 368h1v1h-1zM305 349h1v1h-1zM305 330h1v1h-1zM305 311h1v1h-1zM305 293h1v1h-1zM305 274h1v1h-1zM305 255h1v1h-1zM305 236h1v1h-1zM305 217h1v1h-1zM305 198h1v1h-1zM305 180h1v1h-1zM305 161h1v1h-1zM324 726h1v1h-1zM324 707h1v1h-1zM324 688h1v1h-1zM324 669h1v1h-1zM324 650h1v1h-1zM324 632h1v1h-1zM324 613h1v1h-1zM324 594h1v1h-1zM324 575h1v1h-1zM324 556h1v1h-1zM324 537h1v1h-1zM324 519h1v1h-1zM324 500h1v1h-1zM324 481h1v1h-1zM324 462h1v1h-1zM324 443h1v1h-1zM324 424h1v1h-1zM324 406h1v1h-1zM324 387h1v1h-1zM324 368h1v1h-1zM324 349h1v1h-1zM324 330h1v1h-1zM324 311h1v1h-1zM324 293h1v1h-1zM324 274h1v1h-1zM324 255h1v1h-1zM324 236h1v1h-1zM324 217h1v1h-1zM324 198h1v1h-1zM324 180h1v1h-1zM324 161h1v1h-1zM343 726h1v1h-1zM343 707h1v1h-1zM343 688h1v1h-1zM343 669h1v1h-1zM343 650h1v1h-1zM343 632h1v1h-1zM343 613h1v1h-1zM343 594h1v1h-1zM343 575h1v1h-1zM343 556h1v1h-1zM343 537h1v1h-1zM343 519h1v1h-1zM343 500h1v1h-1zM343 481h1v1h-1zM343 462h1v1h-1zM343 443h1v1h-1zM343 424h1v1h-1zM343 406h1v1h-1zM343 387h1v1h-1zM343 368h1v1h-1zM343 349h1v1h-1zM343 330h1v1h-1zM343 311h1v1h-1zM343 293h1v1h-1zM343 274h1v1h-1zM343 255h1v1h-1zM343 236h1v1h-1zM343 217h1v1h-1zM343 198h1v1h-1zM343 180h1v1h-1zM343 161h1v1h-1zM362 726h1v1h-1zM362 707h1v1h-1zM362 688h1v1h-1zM362 669h1v1h-1zM362 650h1v1h-1zM362 632h1v1h-1zM362 613h1v1h-1zM362 594h1v1h-1zM362 575h1v1h-1zM362 556h1v1h-1zM362 537h1v1h-1zM362 519h1v1h-1zM362 500h1v1h-1zM362 481h1v1h-1zM362 462h1v1h-1zM362 443h1v1h-1zM362 424h1v1h-1zM362 406h1v1h-1zM362 387h1v1h-1zM362 368h1v1h-1zM362 349h1v1h-1zM362 330h1v1h-1zM362 311h1v1h-1zM362 293h1v1h-1zM362 274h1v1h-1zM362 255h1v1h-1zM362 236h1v1h-1zM362 217h1v1h-1zM362 198h1v1h-1zM362 180h1v1h-1zM362 161h1v1h-1zM381 726h1v1h-1zM381 707h1v1h-1zM381 688h1v1h-1zM381 669h1v1h-1zM381 650h1v1h-1zM381 632h1v1h-1zM381 613h1v1h-1zM381 594h1v1h-1zM381 575h1v1h-1zM381 556h1v1h-1zM381 537h1v1h-1zM381 519h1v1h-1zM381 500h1v1h-1zM381 481h1v1h-1zM381 462h1v1h-1zM381 443h1v1h-1zM381 424h1v1h-1zM381 406h1v1h-1zM381 387h1v1h-1zM381 368h1v1h-1zM381 349h1v1h-1zM381 330h1v1h-1zM381 311h1v1h-1zM381 293h1v1h-1zM381 274h1v1h-1zM381 255h1v1h-1zM381 236h1v1h-1zM381 217h1v1h-1zM381 198h1v1h-1zM381 180h1v1h-1zM381 161h1v1h-1zM399 726h1v1h-1zM399 707h1v1h-1zM399 688h1v1h-1zM399 669h1v1h-1zM399 650h1v1h-1zM399 632h1v1h-1zM399 613h1v1h-1zM399 594h1v1h-1zM399 575h1v1h-1zM399 556h1v1h-1zM399 537h1v1h-1zM399 519h1v1h-1zM399 500h1v1h-1zM399 481h1v1h-1zM399 462h1v1h-1zM399 443h1v1h-1zM399 424h1v1h-1zM399 406h1v1h-1zM399 387h1v1h-1zM399 368h1v1h-1zM399 349h1v1h-1zM399 330h1v1h-1zM399 311h1v1h-1zM399 293h1v1h-1zM399 274h1v1h-1zM399 255h1v1h-1zM399 236h1v1h-1zM399 217h1v1h-1zM399 198h1v1h-1zM399 180h1v1h-1zM399 161h1v1h-1zM418 726h1v1h-1zM418 707h1v1h-1zM418 688h1v1h-1zM418 669h1v1h-1zM418 650h1v1h-1zM418 632h1v1h-1zM418 613h1v1h-1zM418 594h1v1h-1zM418 575h1v1h-1zM418 556h1v1h-1zM418 537h1v1h-1zM418 519h1v1h-1zM418 500h1v1h-1zM418 481h1v1h-1zM418 462h1v1h-1zM418 443h1v1h-1zM418 424h1v1h-1zM418 406h1v1h-1zM418 387h1v1h-1zM418 368h1v1h-1zM418 349h1v1h-1zM418 330h1v1h-1zM418 311h1v1h-1zM418 293h1v1h-1zM418 274h1v1h-1zM418 255h1v1h-1zM418 236h1v1h-1zM418 217h1v1h-1zM418 198h1v1h-1zM418 180h1v1h-1zM418 161h1v1h-1zM437 726h1v1h-1zM437 707h1v1h-1zM437 688h1v1h-1zM437 669h1v1h-1zM437 650h1v1h-1zM437 632h1v1h-1zM437 613h1v1h-1zM437 594h1v1h-1zM437 575h1v1h-1zM437 556h1v1h-1zM437 537h1v1h-1zM437 519h1v1h-1zM437 500h1v1h-1zM437 481h1v1h-1zM437 462h1v1h-1zM437 443h1v1h-1zM437 424h1v1h-1zM437 406h1v1h-1zM437 387h1v1h-1zM437 368h1v1h-1zM437 349h1v1h-1zM437 330h1v1h-1zM437 311h1v1h-1zM437 293h1v1h-1zM437 274h1v1h-1zM437 255h1v1h-1zM437 236h1v1h-1zM437 217h1v1h-1zM437 198h1v1h-1zM437 180h1v1h-1zM437 161h1v1h-1zM456 726h1v1h-1zM456 707h1v1h-1zM456 688h1v1h-1zM456 669h1v1h-1zM456 650h1v1h-1zM456 632h1v1h-1zM456 613h1v1h-1zM456 594h1v1h-1zM456 575h1v1h-1zM456 556h1v1h-1zM456 537h1v1h-1zM456 519h1v1h-1zM456 500h1v1h-1zM456 481h1v1h-1zM456 462h1v1h-1zM456 443h1v1h-1zM456 424h1v1h-1zM456 406h1v1h-1zM456 387h1v1h-1zM456 368h1v1h-1zM456 349h1v1h-1zM456 330h1v1h-1zM456 311h1v1h-1zM456 293h1v1h-1zM456 274h1v1h-1zM456 255h1v1h-1zM456 236h1v1h-1zM456 217h1v1h-1zM456 198h1v1h-1zM456 180h1v1h-1zM456 161h1v1h-1zM475 726h1v1h-1zM475 707h1v1h-1zM475 688h1v1h-1zM475 669h1v1h-1zM475 650h1v1h-1zM475 632h1v1h-1zM475 613h1v1h-1zM475 594h1v1h-1zM475 575h1v1h-1zM475 556h1v1h-1zM475 537h1v1h-1zM475 519h1v1h-1zM475 500h1v1h-1zM475 481h1v1h-1zM475 462h1v1h-1zM475 443h1v1h-1zM475 424h1v1h-1zM475 406h1v1h-1zM475 387h1v1h-1zM475 368h1v1h-1zM475 349h1v1h-1zM475 330h1v1h-1zM475 311h1v1h-1zM475 293h1v1h-1zM475 274h1v1h-1zM475 255h1v1h-1zM475 236h1v1h-1zM475 217h1v1h-1zM475 198h1v1h-1zM475 180h1v1h-1zM475 161h1v1h-1zM494 726h1v1h-1zM494 707h1v1h-1zM494 688h1v1h-1zM494 669h1v1h-1zM494 650h1v1h-1zM494 632h1v1h-1zM494 613h1v1h-1zM494 594h1v1h-1zM494 575h1v1h-1zM494 556h1v1h-1zM494 537h1v1h-1zM494 519h1v1h-1zM494 500h1v1h-1zM494 481h1v1h-1zM494 462h1v1h-1zM494 443h1v1h-1zM494 424h1v1h-1zM494 406h1v1h-1zM494 387h1v1h-1zM494 368h1v1h-1zM494 349h1v1h-1zM494 330h1v1h-1zM494 311h1v1h-1zM494 293h1v1h-1zM494 274h1v1h-1zM494 255h1v1h-1zM494 236h1v1h-1zM494 217h1v1h-1zM494 198h1v1h-1zM494 180h1v1h-1zM494 161h1v1h-1zM512 726h1v1h-1zM512 707h1v1h-1zM512 688h1v1h-1zM512 669h1v1h-1zM512 650h1v1h-1zM512 632h1v1h-1zM512 613h1v1h-1zM512 594h1v1h-1zM512 575h1v1h-1zM512 556h1v1h-1zM512 537h1v1h-1zM512 519h1v1h-1zM512 500h1v1h-1zM512 481h1v1h-1zM512 462h1v1h-1zM512 443h1v1h-1zM512 424h1v1h-1zM512 406h1v1h-1zM512 387h1v1h-1zM512 368h1v1h-1zM512 349h1v1h-1zM512 330h1v1h-1zM512 311h1v1h-1zM512 293h1v1h-1zM512 274h1v1h-1zM512 255h1v1h-1zM512 236h1v1h-1zM512 217h1v1h-1zM512 198h1v1h-1zM512 180h1v1h-1zM512 161h1v1h-1zM531 726h1v1h-1zM531 707h1v1h-1zM531 688h1v1h-1zM531 669h1v1h-1zM531 650h1v1h-1zM531 632h1v1h-1zM531 613h1v1h-1zM531 594h1v1h-1zM531 575h1v1h-1zM531 556h1v1h-1zM531 537h1v1h-1zM531 519h1v1h-1zM531 500h1v1h-1zM531 481h1v1h-1zM531 462h1v1h-1zM531 443h1v1h-1zM531 424h1v1h-1zM531 406h1v1h-1zM531 387h1v1h-1zM531 368h1v1h-1zM531 349h1v1h-1zM531 330h1v1h-1zM531 311h1v1h-1zM531 293h1v1h-1zM531 274h1v1h-1zM531 255h1v1h-1zM531 236h1v1h-1zM531 217h1v1h-1zM531 198h1v1h-1zM531 180h1v1h-1zM531 161h1v1h-1zM550 726h1v1h-1zM550 707h1v1h-1zM550 688h1v1h-1zM550 669h1v1h-1zM550 650h1v1h-1zM550 632h1v1h-1zM550 613h1v1h-1zM550 594h1v1h-1zM550 575h1v1h-1zM550 556h1v1h-1zM550 537h1v1h-1zM550 519h1v1h-1zM550 500h1v1h-1zM550 481h1v1h-1zM550 462h1v1h-1zM550 443h1v1h-1zM550 424h1v1h-1zM550 406h1v1h-1zM550 387h1v1h-1zM550 368h1v1h-1zM550 349h1v1h-1zM550 330h1v1h-1zM550 311h1v1h-1zM550 293h1v1h-1zM550 274h1v1h-1zM550 255h1v1h-1zM550 236h1v1h-1zM550 217h1v1h-1zM550 198h1v1h-1zM550 180h1v1h-1zM550 161h1v1h-1zM569 726h1v1h-1zM569 707h1v1h-1zM569 688h1v1h-1zM569 669h1v1h-1zM569 650h1v1h-1zM569 632h1v1h-1zM569 613h1v1h-1zM569 594h1v1h-1zM569 575h1v1h-1zM569 556h1v1h-1zM569 537h1v1h-1zM569 519h1v1h-1zM569 500h1v1h-1zM569 481h1v1h-1zM569 462h1v1h-1zM569 443h1v1h-1zM569 424h1v1h-1zM569 406h1v1h-1zM569 387h1v1h-1zM569 368h1v1h-1zM569 349h1v1h-1zM569 330h1v1h-1zM569 311h1v1h-1zM569 293h1v1h-1zM569 274h1v1h-1zM569 255h1v1h-1zM569 236h1v1h-1zM569 217h1v1h-1zM569 198h1v1h-1zM569 180h1v1h-1zM569 161h1v1h-1zM588 726h1v1h-1zM588 707h1v1h-1zM588 688h1v1h-1zM588 669h1v1h-1zM588 650h1v1h-1zM588 632h1v1h-1zM588 613h1v1h-1zM588 594h1v1h-1zM588 575h1v1h-1zM588 556h1v1h-1zM588 537h1v1h-1zM588 519h1v1h-1zM588 500h1v1h-1zM588 481h1v1h-1zM588 462h1v1h-1zM588 443h1v1h-1zM588 424h1v1h-1zM588 406h1v1h-1zM588 387h1v1h-1zM588 368h1v1h-1zM588 349h1v1h-1zM588 330h1v1h-1zM588 311h1v1h-1zM588 293h1v1h-1zM588 274h1v1h-1zM588 255h1v1h-1zM588 236h1v1h-1zM588 217h1v1h-1zM588 198h1v1h-1zM588 180h1v1h-1zM588 161h1v1h-1zM607 726h1v1h-1zM607 707h1v1h-1zM607 688h1v1h-1zM607 669h1v1h-1zM607 650h1v1h-1zM607 632h1v1h-1zM607 613h1v1h-1zM607 594h1v1h-1zM607 575h1v1h-1zM607 556h1v1h-1zM607 537h1v1h-1zM607 519h1v1h-1zM607 500h1v1h-1zM607 481h1v1h-1zM607 462h1v1h-1zM607 443h1v1h-1zM607 424h1v1h-1zM607 406h1v1h-1zM607 387h1v1h-1zM607 368h1v1h-1zM607 349h1v1h-1zM607 330h1v1h-1zM607 311h1v1h-1zM607 293h1v1h-1zM607 274h1v1h-1zM607 255h1v1h-1zM607 236h1v1h-1zM607 217h1v1h-1zM607 198h1v1h-1zM607 180h1v1h-1zM607 161h1v1h-1zM625 726h1v1h-1zM625 707h1v1h-1zM625 688h1v1h-1zM625 669h1v1h-1zM625 650h1v1h-1zM625 632h1v1h-1zM625 613h1v1h-1zM625 594h1v1h-1zM625 575h1v1h-1zM625 556h1v1h-1zM625 537h1v1h-1zM625 519h1v1h-1zM625 500h1v1h-1zM625 481h1v1h-1zM625 462h1v1h-1zM625 443h1v1h-1zM625 424h1v1h-1zM625 406h1v1h-1zM625 387h1v1h-1zM625 368h1v1h-1zM625 349h1v1h-1zM625 330h1v1h-1zM625 311h1v1h-1zM625 293h1v1h-1zM625 274h1v1h-1zM625 255h1v1h-1zM625 236h1v1h-1zM625 217h1v1h-1zM625 198h1v1h-1zM625 180h1v1h-1zM625 161h1v1h-1zM644 726h1v1h-1zM644 707h1v1h-1zM644 688h1v1h-1zM644 669h1v1h-1zM644 650h1v1h-1zM644 632h1v1h-1zM644 613h1v1h-1zM644 594h1v1h-1zM644 575h1v1h-1zM644 556h1v1h-1zM644 537h1v1h-1zM644 519h1v1h-1zM644 500h1v1h-1zM644 481h1v1h-1zM644 462h1v1h-1zM644 443h1v1h-1zM644 424h1v1h-1zM644 406h1v1h-1zM644 387h1v1h-1zM644 368h1v1h-1zM644 349h1v1h-1zM644 330h1v1h-1zM644 311h1v1h-1zM644 293h1v1h-1zM644 274h1v1h-1zM644 255h1v1h-1zM644 236h1v1h-1zM644 217h1v1h-1zM644 198h1v1h-1zM644 180h1v1h-1zM644 161h1v1h-1zM663 726h1v1h-1zM663 707h1v1h-1zM663 688h1v1h-1zM663 669h1v1h-1zM663 650h1v1h-1zM663 632h1v1h-1zM663 613h1v1h-1zM663 594h1v1h-1zM663 575h1v1h-1zM663 556h1v1h-1zM663 537h1v1h-1zM663 519h1v1h-1zM663 500h1v1h-1zM663 481h1v1h-1zM663 462h1v1h-1zM663 443h1v1h-1zM663 424h1v1h-1zM663 406h1v1h-1zM663 387h1v1h-1zM663 368h1v1h-1zM663 349h1v1h-1zM663 330h1v1h-1zM663 311h1v1h-1zM663 293h1v1h-1zM663 274h1v1h-1zM663 255h1v1h-1zM663 236h1v1h-1zM663 217h1v1h-1zM663 198h1v1h-1zM663 180h1v1h-1zM663 161h1v1h-1zM682 726h1v1h-1zM682 707h1v1h-1zM682 688h1v1h-1zM682 669h1v1h-1zM682 650h1v1h-1zM682 632h1v1h-1zM682 613h1v1h-1zM682 594h1v1h-1zM682 575h1v1h-1zM682 556h1v1h-1zM682 537h1v1h-1zM682 519h1v1h-1zM682 500h1v1h-1zM682 481h1v1h-1zM682 462h1v1h-1zM682 443h1v1h-1zM682 424h1v1h-1zM682 406h1v1h-1zM682 387h1v1h-1zM682 368h1v1h-1zM682 349h1v1h-1zM682 330h1v1h-1zM682 311h1v1h-1zM682 293h1v1h-1zM682 274h1v1h-1zM682 255h1v1h-1zM682 236h1v1h-1zM682 217h1v1h-1zM682 198h1v1h-1zM682 180h1v1h-1zM682 161h1v1h-1zM701 726h1v1h-1zM701 707h1v1h-1zM701 688h1v1h-1zM701 669h1v1h-1zM701 650h1v1h-1zM701 632h1v1h-1zM701 613h1v1h-1zM701 594h1v1h-1zM701 575h1v1h-1zM701 556h1v1h-1zM701 537h1v1h-1zM701 519h1v1h-1zM701 500h1v1h-1zM701 481h1v1h-1zM701 462h1v1h-1zM701 443h1v1h-1zM701 424h1v1h-1zM701 406h1v1h-1zM701 387h1v1h-1zM701 368h1v1h-1zM701 349h1v1h-1zM701 330h1v1h-1zM701 311h1v1h-1zM701 293h1v1h-1zM701 274h1v1h-1zM701 255h1v1h-1zM701 236h1v1h-1zM701 217h1v1h-1zM701 198h1v1h-1zM701 180h1v1h-1zM701 161h1v1h-1zM720 726h1v1h-1zM720 707h1v1h-1zM720 688h1v1h-1zM720 669h1v1h-1zM720 650h1v1h-1zM720 632h1v1h-1zM720 613h1v1h-1zM720 594h1v1h-1zM720 575h1v1h-1zM720 556h1v1h-1zM720 537h1v1h-1zM720 519h1v1h-1zM720 500h1v1h-1zM720 481h1v1h-1zM720 462h1v1h-1zM720 443h1v1h-1zM720 424h1v1h-1zM720 406h1v1h-1zM720 387h1v1h-1zM720 368h1v1h-1zM720 349h1v1h-1zM720 330h1v1h-1zM720 311h1v1h-1zM720 293h1v1h-1zM720 274h1v1h-1zM720 255h1v1h-1zM720 236h1v1h-1zM720 217h1v1h-1zM720 198h1v1h-1zM720 180h1v1h-1zM720 161h1v1h-1zM738 726h1v1h-1zM738 707h1v1h-1zM738 688h1v1h-1zM738 669h1v1h-1zM738 650h1v1h-1zM738 632h1v1h-1zM738 613h1v1h-1zM738 594h1v1h-1zM738 575h1v1h-1zM738 556h1v1h-1zM738 537h1v1h-1zM738 519h1v1h-1zM738 500h1v1h-1zM738 481h1v1h-1zM738 462h1v1h-1zM738 443h1v1h-1zM738 424h1v1h-1zM738 406h1v1h-1zM738 387h1v1h-1zM738 368h1v1h-1zM738 349h1v1h-1zM738 330h1v1h-1zM738 311h1v1h-1zM738 293h1v1h-1zM738 274h1v1h-1zM738 255h1v1h-1zM738 236h1v1h-1zM738 217h1v1h-1zM738 198h1v1h-1zM738 180h1v1h-1zM738 161h1v1h-1zM757 726h1v1h-1zM757 707h1v1h-1zM757 688h1v1h-1zM757 669h1v1h-1zM757 650h1v1h-1zM757 632h1v1h-1zM757 613h1v1h-1zM757 594h1v1h-1zM757 575h1v1h-1zM757 556h1v1h-1zM757 537h1v1h-1zM757 519h1v1h-1zM757 500h1v1h-1zM757 481h1v1h-1zM757 462h1v1h-1zM757 443h1v1h-1zM757 424h1v1h-1zM757 406h1v1h-1zM757 387h1v1h-1zM757 368h1v1h-1zM757 349h1v1h-1zM757 330h1v1h-1zM757 311h1v1h-1zM757 293h1v1h-1zM757 274h1v1h-1zM757 255h1v1h-1zM757 236h1v1h-1zM757 217h1v1h-1zM757 198h1v1h-1zM757 180h1v1h-1zM757 161h1v1h-1zM776 726h1v1h-1zM776 707h1v1h-1zM776 688h1v1h-1zM776 669h1v1h-1zM776 650h1v1h-1zM776 632h1v1h-1zM776 613h1v1h-1zM776 594h1v1h-1zM776 575h1v1h-1zM776 556h1v1h-1zM776 537h1v1h-1zM776 519h1v1h-1zM776 500h1v1h-1zM776 481h1v1h-1zM776 462h1v1h-1zM776 443h1v1h-1zM776 424h1v1h-1zM776 406h1v1h-1zM776 387h1v1h-1zM776 368h1v1h-1zM776 349h1v1h-1zM776 330h1v1h-1zM776 311h1v1h-1zM776 293h1v1h-1zM776 274h1v1h-1zM776 255h1v1h-1zM776 236h1v1h-1zM776 217h1v1h-1zM776 198h1v1h-1zM776 180h1v1h-1zM776 161h1v1h-1zM795 726h1v1h-1zM795 707h1v1h-1zM795 688h1v1h-1zM795 669h1v1h-1zM795 650h1v1h-1zM795 632h1v1h-1zM795 613h1v1h-1zM795 594h1v1h-1zM795 575h1v1h-1zM795 556h1v1h-1zM795 537h1v1h-1zM795 519h1v1h-1zM795 500h1v1h-1zM795 481h1v1h-1zM795 462h1v1h-1zM795 443h1v1h-1zM795 424h1v1h-1zM795 406h1v1h-1zM795 387h1v1h-1zM795 368h1v1h-1zM795 349h1v1h-1zM795 330h1v1h-1zM795 311h1v1h-1zM795 293h1v1h-1zM795 274h1v1h-1zM795 255h1v1h-1zM795 236h1v1h-1zM795 217h1v1h-1zM795 198h1v1h-1zM795 180h1v1h-1zM795 161h1v1h-1zM814 726h1v1h-1zM814 707h1v1h-1zM814 688h1v1h-1zM814 669h1v1h-1zM814 650h1v1h-1zM814 632h1v1h-1zM814 613h1v1h-1zM814 594h1v1h-1zM814 575h1v1h-1zM814 556h1v1h-1zM814 537h1v1h-1zM814 519h1v1h-1zM814 500h1v1h-1zM814 481h1v1h-1zM814 462h1v1h-1zM814 443h1v1h-1zM814 424h1v1h-1zM814 406h1v1h-1zM814 387h1v1h-1zM814 368h1v1h-1zM814 349h1v1h-1zM814 330h1v1h-1zM814 311h1v1h-1zM814 293h1v1h-1zM814 274h1v1h-1zM814 255h1v1h-1zM814 236h1v1h-1zM814 217h1v1h-1zM814 198h1v1h-1zM814 180h1v1h-1zM814 161h1v1h-1zM833 726h1v1h-1zM833 707h1v1h-1zM833 688h1v1h-1zM833 669h1v1h-1zM833 650h1v1h-1zM833 632h1v1h-1zM833 613h1v1h-1zM833 594h1v1h-1zM833 575h1v1h-1zM833 556h1v1h-1zM833 537h1v1h-1zM833 519h1v1h-1zM833 500h1v1h-1zM833 481h1v1h-1zM833 462h1v1h-1zM833 443h1v1h-1zM833 424h1v1h-1zM833 406h1v1h-1zM833 387h1v1h-1zM833 368h1v1h-1zM833 349h1v1h-1zM833 330h1v1h-1zM833 311h1v1h-1zM833 293h1v1h-1zM833 274h1v1h-1zM833 255h1v1h-1zM833 236h1v1h-1zM833 217h1v1h-1zM833 198h1v1h-1zM833 180h1v1h-1zM833 161h1v1h-1zM852 726h1v1h-1zM852 707h1v1h-1zM852 688h1v1h-1zM852 669h1v1h-1zM852 650h1v1h-1zM852 632h1v1h-1zM852 613h1v1h-1zM852 594h1v1h-1zM852 575h1v1h-1zM852 556h1v1h-1zM852 537h1v1h-1zM852 519h1v1h-1zM852 500h1v1h-1zM852 481h1v1h-1zM852 462h1v1h-1zM852 443h1v1h-1zM852 424h1v1h-1zM852 406h1v1h-1zM852 387h1v1h-1zM852 368h1v1h-1zM852 349h1v1h-1zM852 330h1v1h-1zM852 311h1v1h-1zM852 293h1v1h-1zM852 274h1v1h-1zM852 255h1v1h-1zM852 236h1v1h-1zM852 217h1v1h-1zM852 198h1v1h-1zM852 180h1v1h-1zM852 161h1v1h-1zM870 726h1v1h-1zM870 707h1v1h-1zM870 688h1v1h-1zM870 669h1v1h-1zM870 650h1v1h-1zM870 632h1v1h-1zM870 613h1v1h-1zM870 594h1v1h-1zM870 575h1v1h-1zM870 556h1v1h-1zM870 537h1v1h-1zM870 519h1v1h-1zM870 500h1v1h-1zM870 481h1v1h-1zM870 462h1v1h-1zM870 443h1v1h-1zM870 424h1v1h-1zM870 406h1v1h-1zM870 387h1v1h-1zM870 368h1v1h-1zM870 349h1v1h-1zM870 330h1v1h-1zM870 311h1v1h-1zM870 293h1v1h-1zM870 274h1v1h-1zM870 255h1v1h-1zM870 236h1v1h-1zM870 217h1v1h-1zM870 198h1v1h-1zM870 180h1v1h-1zM870 161h1v1h-1zM889 726h1v1h-1zM889 707h1v1h-1zM889 688h1v1h-1zM889 669h1v1h-1zM889 650h1v1h-1zM889 632h1v1h-1zM889 613h1v1h-1zM889 594h1v1h-1zM889 575h1v1h-1zM889 556h1v1h-1zM889 537h1v1h-1zM889 519h1v1h-1zM889 500h1v1h-1zM889 481h1v1h-1zM889 462h1v1h-1zM889 443h1v1h-1zM889 424h1v1h-1zM889 406h1v1h-1zM889 387h1v1h-1zM889 368h1v1h-1zM889 349h1v1h-1zM889 330h1v1h-1zM889 311h1v1h-1zM889 293h1v1h-1zM889 274h1v1h-1zM889 255h1v1h-1zM889 236h1v1h-1zM889 217h1v1h-1zM889 198h1v1h-1zM889 180h1v1h-1zM889 161h1v1h-1zM908 726h1v1h-1zM908 707h1v1h-1zM908 688h1v1h-1zM908 669h1v1h-1zM908 650h1v1h-1zM908 632h1v1h-1zM908 613h1v1h-1zM908 594h1v1h-1zM908 575h1v1h-1zM908 556h1v1h-1zM908 537h1v1h-1zM908 519h1v1h-1zM908 500h1v1h-1zM908 481h1v1h-1zM908 462h1v1h-1zM908 443h1v1h-1zM908 424h1v1h-1zM908 406h1v1h-1zM908 387h1v1h-1zM908 368h1v1h-1zM908 349h1v1h-1zM908 330h1v1h-1zM908 311h1v1h-1zM908 293h1v1h-1zM908 274h1v1h-1zM908 255h1v1h-1zM908 236h1v1h-1zM908 217h1v1h-1zM908 198h1v1h-1zM908 180h1v1h-1zM908 161h1v1h-1zM927 726h1v1h-1zM927 707h1v1h-1zM927 688h1v1h-1zM927 669h1v1h-1zM927 650h1v1h-1zM927 632h1v1h-1zM927 613h1v1h-1zM927 594h1v1h-1zM927 575h1v1h-1zM927 556h1v1h-1zM927 537h1v1h-1zM927 519h1v1h-1zM927 500h1v1h-1zM927 481h1v1h-1zM927 462h1v1h-1zM927 443h1v1h-1zM927 424h1v1h-1zM927 406h1v1h-1zM927 387h1v1h-1zM927 368h1v1h-1zM927 349h1v1h-1zM927 330h1v1h-1zM927 311h1v1h-1zM927 293h1v1h-1zM927 274h1v1h-1zM927 255h1v1h-1zM927 236h1v1h-1zM927 217h1v1h-1zM927 198h1v1h-1zM927 180h1v1h-1zM927 161h1v1h-1zM946 726h1v1h-1zM946 707h1v1h-1zM946 688h1v1h-1zM946 669h1v1h-1zM946 650h1v1h-1zM946 632h1v1h-1zM946 613h1v1h-1zM946 594h1v1h-1zM946 575h1v1h-1zM946 556h1v1h-1zM946 537h1v1h-1zM946 519h1v1h-1zM946 500h1v1h-1zM946 481h1v1h-1zM946 462h1v1h-1zM946 443h1v1h-1zM946 424h1v1h-1zM946 406h1v1h-1zM946 387h1v1h-1zM946 368h1v1h-1zM946 349h1v1h-1zM946 330h1v1h-1zM946 311h1v1h-1zM946 293h1v1h-1zM946 274h1v1h-1zM946 255h1v1h-1zM946 236h1v1h-1zM946 217h1v1h-1zM946 198h1v1h-1zM946 180h1v1h-1zM946 161h1v1h-1zM965 726h1v1h-1zM965 707h1v1h-1zM965 688h1v1h-1zM965 669h1v1h-1zM965 650h1v1h-1zM965 632h1v1h-1zM965 613h1v1h-1zM965 594h1v1h-1zM965 575h1v1h-1zM965 556h1v1h-1zM965 537h1v1h-1zM965 519h1v1h-1zM965 500h1v1h-1zM965 481h1v1h-1zM965 462h1v1h-1zM965 443h1v1h-1zM965 424h1v1h-1zM965 406h1v1h-1zM965 387h1v1h-1zM965 368h1v1h-1zM965 349h1v1h-1zM965 330h1v1h-1zM965 311h1v1h-1zM965 293h1v1h-1zM965 274h1v1h-1zM965 255h1v1h-1zM965 236h1v1h-1zM965 217h1v1h-1zM965 198h1v1h-1zM965 180h1v1h-1zM965 161h1v1h-1zM983 726h1v1h-1zM983 707h1v1h-1zM983 688h1v1h-1zM983 669h1v1h-1zM983 650h1v1h-1zM983 632h1v1h-1zM983 613h1v1h-1zM983 594h1v1h-1zM983 575h1v1h-1zM983 556h1v1h-1zM983 537h1v1h-1zM983 519h1v1h-1zM983 500h1v1h-1zM983 481h1v1h-1zM983 462h1v1h-1zM983 443h1v1h-1zM983 424h1v1h-1zM983 406h1v1h-1zM983 387h1v1h-1zM983 368h1v1h-1zM983 349h1v1h-1zM983 330h1v1h-1zM983 311h1v1h-1zM983 293h1v1h-1zM983 274h1v1h-1zM983 255h1v1h-1zM983 236h1v1h-1zM983 217h1v1h-1zM983 198h1v1h-1zM983 180h1v1h-1zM983 161h1v1h-1zM1002 726h1v1h-1zM1002 707h1v1h-1zM1002 688h1v1h-1zM1002 669h1v1h-1zM1002 650h1v1h-1zM1002 632h1v1h-1zM1002 613h1v1h-1zM1002 594h1v1h-1zM1002 575h1v1h-1zM1002 556h1v1h-1zM1002 537h1v1h-1zM1002 519h1v1h-1zM1002 500h1v1h-1zM1002 481h1v1h-1zM1002 462h1v1h-1zM1002 443h1v1h-1zM1002 424h1v1h-1zM1002 406h1v1h-1zM1002 387h1v1h-1zM1002 368h1v1h-1zM1002 349h1v1h-1zM1002 330h1v1h-1zM1002 311h1v1h-1zM1002 293h1v1h-1zM1002 274h1v1h-1zM1002 255h1v1h-1zM1002 236h1v1h-1zM1002 217h1v1h-1zM1002 198h1v1h-1zM1002 180h1v1h-1zM1002 161h1v1h-1zM1021 726h1v1h-1zM1021 707h1v1h-1zM1021 688h1v1h-1zM1021 669h1v1h-1zM1021 650h1v1h-1zM1021 632h1v1h-1zM1021 613h1v1h-1zM1021 594h1v1h-1zM1021 575h1v1h-1zM1021 556h1v1h-1zM1021 537h1v1h-1zM1021 519h1v1h-1zM1021 500h1v1h-1zM1021 481h1v1h-1zM1021 462h1v1h-1zM1021 443h1v1h-1zM1021 424h1v1h-1zM1021 406h1v1h-1zM1021 387h1v1h-1zM1021 368h1v1h-1zM1021 349h1v1h-1zM1021 330h1v1h-1zM1021 311h1v1h-1zM1021 293h1v1h-1zM1021 274h1v1h-1zM1021 255h1v1h-1zM1021 236h1v1h-1zM1021 217h1v1h-1zM1021 198h1v1h-1zM1021 180h1v1h-1zM1021 161h1v1h-1zM1040 726h1v1h-1zM1040 707h1v1h-1zM1040 688h1v1h-1zM1040 669h1v1h-1zM1040 650h1v1h-1zM1040 632h1v1h-1zM1040 613h1v1h-1zM1040 594h1v1h-1zM1040 575h1v1h-1zM1040 556h1v1h-1zM1040 537h1v1h-1zM1040 519h1v1h-1zM1040 500h1v1h-1zM1040 481h1v1h-1zM1040 462h1v1h-1zM1040 443h1v1h-1zM1040 424h1v1h-1zM1040 406h1v1h-1zM1040 387h1v1h-1zM1040 368h1v1h-1zM1040 349h1v1h-1zM1040 330h1v1h-1zM1040 311h1v1h-1zM1040 293h1v1h-1zM1040 274h1v1h-1zM1040 255h1v1h-1zM1040 236h1v1h-1zM1040 217h1v1h-1zM1040 198h1v1h-1zM1040 180h1v1h-1zM1040 161h1v1h-1zM1059 726h1v1h-1zM1059 707h1v1h-1zM1059 688h1v1h-1zM1059 669h1v1h-1zM1059 650h1v1h-1zM1059 632h1v1h-1zM1059 613h1v1h-1zM1059 594h1v1h-1zM1059 575h1v1h-1zM1059 556h1v1h-1zM1059 537h1v1h-1zM1059 519h1v1h-1zM1059 500h1v1h-1zM1059 481h1v1h-1zM1059 462h1v1h-1zM1059 443h1v1h-1zM1059 424h1v1h-1zM1059 406h1v1h-1zM1059 387h1v1h-1zM1059 368h1v1h-1zM1059 349h1v1h-1zM1059 330h1v1h-1zM1059 311h1v1h-1zM1059 293h1v1h-1zM1059 274h1v1h-1zM1059 255h1v1h-1zM1059 236h1v1h-1zM1059 217h1v1h-1zM1059 198h1v1h-1zM1059 180h1v1h-1zM1059 161h1v1h-1zM1078 726h1v1h-1zM1078 707h1v1h-1zM1078 688h1v1h-1zM1078 669h1v1h-1zM1078 650h1v1h-1zM1078 632h1v1h-1zM1078 613h1v1h-1zM1078 594h1v1h-1zM1078 575h1v1h-1zM1078 556h1v1h-1zM1078 537h1v1h-1zM1078 519h1v1h-1zM1078 500h1v1h-1zM1078 481h1v1h-1zM1078 462h1v1h-1zM1078 443h1v1h-1zM1078 424h1v1h-1zM1078 406h1v1h-1zM1078 387h1v1h-1zM1078 368h1v1h-1zM1078 349h1v1h-1zM1078 330h1v1h-1zM1078 311h1v1h-1zM1078 293h1v1h-1zM1078 274h1v1h-1zM1078 255h1v1h-1zM1078 236h1v1h-1zM1078 217h1v1h-1zM1078 198h1v1h-1zM1078 180h1v1h-1zM1078 161h1v1h-1zM1096 726h1v1h-1zM1096 707h1v1h-1zM1096 688h1v1h-1zM1096 669h1v1h-1zM1096 650h1v1h-1zM1096 632h1v1h-1zM1096 613h1v1h-1zM1096 594h1v1h-1zM1096 575h1v1h-1zM1096 556h1v1h-1zM1096 537h1v1h-1zM1096 519h1v1h-1zM1096 500h1v1h-1zM1096 481h1v1h-1zM1096 462h1v1h-1zM1096 443h1v1h-1zM1096 424h1v1h-1zM1096 406h1v1h-1zM1096 387h1v1h-1zM1096 368h1v1h-1zM1096 349h1v1h-1zM1096 330h1v1h-1zM1096 311h1v1h-1zM1096 293h1v1h-1zM1096 274h1v1h-1zM1096 255h1v1h-1zM1096 236h1v1h-1zM1096 217h1v1h-1zM1096 198h1v1h-1zM1096 180h1v1h-1zM1096 161h1v1h-1zM1115 726h1v1h-1zM1115 707h1v1h-1zM1115 688h1v1h-1zM1115 669h1v1h-1zM1115 650h1v1h-1zM1115 632h1v1h-1zM1115 613h1v1h-1zM1115 594h1v1h-1zM1115 575h1v1h-1zM1115 556h1v1h-1zM1115 537h1v1h-1zM1115 519h1v1h-1zM1115 500h1v1h-1zM1115 481h1v1h-1zM1115 462h1v1h-1zM1115 443h1v1h-1zM1115 424h1v1h-1zM1115 406h1v1h-1zM1115 387h1v1h-1zM1115 368h1v1h-1zM1115 349h1v1h-1zM1115 330h1v1h-1zM1115 311h1v1h-1zM1115 293h1v1h-1zM1115 274h1v1h-1zM1115 255h1v1h-1zM1115 236h1v1h-1zM1115 217h1v1h-1zM1115 198h1v1h-1zM1115 180h1v1h-1zM1115 161h1v1h-1z" fill="#474747"/>
<circle cx="607.0" cy="443.3" r="188.3" stroke="#b4b4b4" stroke-width="1" fill="none"/>
<circle cx="607.0" cy="443.3" r="169.2" stroke="#b4b4b4" stroke-width="1" fill="none"/>
<circle cx="607.0" cy="443.3" r="158" stroke="#5a2018" stroke-width="1" fill="none"/>
<circle cx="607.0" cy="443.3" r="146.9" stroke="#5a2018" stroke-width="1" fill="none"/>
<path transform="translate(660.45 325.97)" d="M10.4 23V1.2M10.4 1.2Q8.2 5.6 3.6 7.6" fill="none" stroke="#7a3a35" stroke-width="2.7"/>
<path transform="translate(704.48 370.70)" d="M2.6 7.3Q2.9 1.5 8.6 1.5Q14.2 1.5 14.2 6.9Q14.2 10.8 9.2 14.5Q3.4 18.8 2.4 21.5H15.8" fill="none" stroke="#7a3a35" stroke-width="2.7"/>
<path transform="translate(720.50 431.80)" d="M2.7 6.5Q3.3 1.5 8.5 1.5Q14 1.5 14 6.4Q14 11 8 11.1Q14.7 11.2 14.7 16.2Q14.7 21.5 8.6 21.5Q2.8 21.5 2.2 16.3" fill="none" stroke="#7a3a35" stroke-width="2.7"/>
<path transform="translate(704.38 492.90)" d="M11.9 23V1.5L1.5 15.8H16.5" fill="none" stroke="#7a3a35" stroke-width="2.7"/>
<path transform="translate(659.30 537.63)" d="M14.4 1.5H5.2L3.6 11Q5.5 9.1 8.8 9.1Q14.7 9.1 14.7 15.2Q14.7 21.5 8.6 21.5Q3.4 21.5 2.7 17.2" fill="none" stroke="#7a3a35" stroke-width="2.7"/>
<path transform="translate(598.30 554.00)" d="M14.2 6Q13.4 1.5 8.8 1.5Q2.7 1.5 2.7 12.3Q2.7 21.5 8.8 21.5Q14.7 21.5 14.7 15.3Q14.7 9.4 8.8 9.4Q4.2 9.4 2.9 13.6" fill="none" stroke="#7a3a35" stroke-width="2.7"/>
<path transform="translate(537.10 537.63)" d="M1.5 1.5H14.6Q8.5 9 6.6 23" fill="none" stroke="#7a3a35" stroke-width="2.7"/>
<path transform="translate(492.37 492.90)" d="M8.8 1.5A4.9 4.8 0 1 1 8.8 11.1A4.9 4.8 0 1 1 8.8 1.5zM8.8 10.9A5.9 5.3 0 1 1 8.8 21.5A5.9 5.3 0 1 1 8.8 10.9z" fill="none" stroke="#7a3a35" stroke-width="2.7"/>
<path transform="translate(475.90 431.80) rotate(180 8.8 11.5)" d="M14.2 6Q13.4 1.5 8.8 1.5Q2.7 1.5 2.7 12.3Q2.7 21.5 8.8 21.5Q14.7 21.5 14.7 15.3Q14.7 9.4 8.8 9.4Q4.2 9.4 2.9 13.6" fill="none" stroke="#7a3a35" stroke-width="2.7"/>
<path transform="translate(482.72 370.70)" d="M10.4 23V1.2M10.4 1.2Q8.2 5.6 3.6 7.6" fill="none" stroke="#7a3a35" stroke-width="2.7"/>
<path transform="translate(500.32 370.70)" d="M8.8 1.5A5.6 10 0 1 1 8.8 21.5A5.6 10 0 1 1 8.8 1.5z" fill="none" stroke="#7a3a35" stroke-width="2.7"/>
<path transform="translate(529.45 325.97)" d="M10.4 23V1.2M10.4 1.2Q8.2 5.6 3.6 7.6" fill="none" stroke="#7a3a35" stroke-width="2.7"/>
<path transform="translate(547.05 325.97)" d="M10.4 23V1.2M10.4 1.2Q8.2 5.6 3.6 7.6" fill="none" stroke="#7a3a35" stroke-width="2.7"/>
<path transform="translate(588.60 309.60)" d="M10.4 23V1.2M10.4 1.2Q8.2 5.6 3.6 7.6" fill="none" stroke="#7a3a35" stroke-width="2.7"/>
<path transform="translate(606.20 309.60)" d="M2.6 7.3Q2.9 1.5 8.6 1.5Q14.2 1.5 14.2 6.9Q14.2 10.8 9.2 14.5Q3.4 18.8 2.4 21.5H15.8" fill="none" stroke="#7a3a35" stroke-width="2.7"/>
<rect x="602.5" y="276.5" width="9" height="9" fill="#0000b4" stroke="#8080b0" stroke-width="1"/>
<rect x="598.5" y="286.5" width="9" height="9" fill="#0000b4" stroke="#8080b0" stroke-width="1"/>
<rect x="606.5" y="286.5" width="9" height="9" fill="#0000b4" stroke="#8080b0" stroke-width="1"/>
<rect x="602.5" y="296.5" width="9" height="9" fill="#0000b4" stroke="#8080b0" stroke-width="1"/>
<rect x="617.5" y="292.5" width="9" height="9" fill="#c4001e" stroke="#c08a8a" stroke-width="1"/>
<rect x="619.5" y="281.5" width="9" height="9" fill="#0000b4" stroke="#8080b0" stroke-width="1"/>
<rect x="633.5" y="295.5" width="9" height="9" fill="#c4001e" stroke="#c08a8a" stroke-width="1"/>
<rect x="635.5" y="284.5" width="9" height="9" fill="#0000b4" stroke="#8080b0" stroke-width="1"/>
<rect x="647.5" y="299.5" width="9" height="9" fill="#c4001e" stroke="#c08a8a" stroke-width="1"/>
<rect x="651.5" y="288.5" width="9" height="9" fill="#0000b4" stroke="#8080b0" stroke-width="1"/>
<rect x="662.5" y="304.5" width="9" height="9" fill="#c4001e" stroke="#c08a8a" stroke-width="1"/>
<rect x="666.5" y="294.5" width="9" height="9" fill="#0000b4" stroke="#8080b0" stroke-width="1"/>
<rect x="683.5" y="298.5" width="9" height="9" fill="#0000b4" stroke="#8080b0" stroke-width="1"/>
<rect x="675.5" y="305.5" width="9" height="9" fill="#0000b4" stroke="#8080b0" stroke-width="1"/>
<rect x="681.5" y="308.5" width="9" height="9" fill="#0000b4" stroke="#8080b0" stroke-width="1"/>
<rect x="673.5" y="315.5" width="9" height="9" fill="#0000b4" stroke="#8080b0" stroke-width="1"/>
<rect x="688.5" y="319.5" width="9" height="9" fill="#c4001e" stroke="#c08a8a" stroke-width="1"/>
<rect x="695.5" y="310.5" width="9" height="9" fill="#0000b4" stroke="#8080b0" stroke-width="1"/>
<rect x="700.5" y="329.5" width="9" height="9" fill="#c4001e" stroke="#c08a8a" stroke-width="1"/>
<rect x="708.5" y="321.5" width="9" height="9" fill="#0000b4" stroke="#8080b0" stroke-width="1"/>
<rect x="711.5" y="340.5" width="9" height="9" fill="#c4001e" stroke="#c08a8a" stroke-width="1"/>
<rect x="719.5" y="333.5" width="9" height="9" fill="#0000b4" stroke="#8080b0" stroke-width="1"/>
<rect x="721.5" y="352.5" width="9" height="9" fill="#c4001e" stroke="#c08a8a" stroke-width="1"/>
<rect x="730.5" y="345.5" width="9" height="9" fill="#0000b4" stroke="#8080b0" stroke-width="1"/>
<rect x="742.5" y="357.5" width="9" height="9" fill="#0000b4" stroke="#8080b0" stroke-width="1"/>
<rect x="732.5" y="359.5" width="9" height="9" fill="#0000b4" stroke="#8080b0" stroke-width="1"/>
<rect x="736.5" y="365.5" width="9" height="9" fill="#0000b4" stroke="#8080b0" stroke-width="1"/>
<rect x="726.5" y="367.5" width="9" height="9" fill="#0000b4" stroke="#8080b0" stroke-width="1"/>
<rect x="736.5" y="379.5" width="9" height="9" fill="#c4001e" stroke="#c08a8a" stroke-width="1"/>
<rect x="746.5" y="374.5" width="9" height="9" fill="#0000b4" stroke="#8080b0" stroke-width="1"/>
<rect x="742.5" y="393.5" width="9" height="9" fill="#c4001e" stroke="#c08a8a" stroke-width="1"/>
<rect x="752.5" y="389.5" width="9" height="9" fill="#0000b4" stroke="#8080b0" stroke-width="1"/>
<rect x="746.5" y="408.5" width="9" height="9" fill="#c4001e" stroke="#c08a8a" stroke-width="1"/>
<rect x="757.5" y="405.5" width="9" height="9" fill="#0000b4" stroke="#8080b0" stroke-width="1"/>
<rect x="748.5" y="423.5" width="9" height="9" fill="#c4001e" stroke="#c08a8a" stroke-width="1"/>
<rect x="759.5" y="422.5" width="9" height="9" fill="#0000b4" stroke="#8080b0" stroke-width="1"/>
<rect x="764.5" y="438.5" width="9" height="9" fill="#0000b4" stroke="#8080b0" stroke-width="1"/>
<rect x="754.5" y="434.5" width="9" height="9" fill="#0000b4" stroke="#8080b0" stroke-width="1"/>
<rect x="754.5" y="442.5" width="9" height="9" fill="#0000b4" stroke="#8080b0" stroke-width="1"/>
<rect x="745.5" y="438.5" width="9" height="9" fill="#0000b4" stroke="#8080b0" stroke-width="1"/>
<rect x="748.5" y="454.5" width="9" height="9" fill="#c4001e" stroke="#c08a8a" stroke-width="1"/>
<rect x="759.5" y="455.5" width="9" height="9" fill="#0000b4" stroke="#8080b0" stroke-width="1"/>
<rect x="746.5" y="469.5" width="9" height="9" fill="#c4001e" stroke="#c08a8a" stroke-width="1"/>
<rect x="757.5" y="471.5" width="9" height="9" fill="#0000b4" stroke="#8080b0" stroke-width="1"/>
<rect x="742.5" y="484.5" width="9" height="9" fill="#c4001e" stroke="#c08a8a" stroke-width="1"/>
<rect x="752.5" y="487.5" width="9" height="9" fill="#0000b4" stroke="#8080b0" stroke-width="1"/>
<rect x="736.5" y="498.5" width="9" height="9" fill="#c4001e" stroke="#c08a8a" stroke-width="1"/>
<rect x="746.5" y="503.5" width="9" height="9" fill="#0000b4" stroke="#8080b0" stroke-width="1"/>
<rect x="742.5" y="519.5" width="9" height="9" fill="#0000b4" stroke="#8080b0" stroke-width="1"/>
<rect x="736.5" y="511.5" width="9" height="9" fill="#0000b4" stroke="#8080b0" stroke-width="1"/>
<rect x="732.5" y="518.5" width="9" height="9" fill="#0000b4" stroke="#8080b0" stroke-width="1"/>
<rect x="726.5" y="510.5" width="9" height="9" fill="#0000b4" stroke="#8080b0" stroke-width="1"/>
<rect x="721.5" y="525.5" width="9" height="9" fill="#c4001e" stroke="#c08a8a" stroke-width="1"/>
<rect x="730.5" y="531.5" width="9" height="9" fill="#0000b4" stroke="#8080b0" stroke-width="1"/>
<rect x="711.5" y="537.5" width="9" height="9" fill="#c4001e" stroke="#c08a8a" stroke-width="1"/>
<rect x="719.5" y="544.5" width="9" height="9" fill="#0000b4" stroke="#8080b0" stroke-width="1"/>
<rect x="700.5" y="547.5" width="9" height="9" fill="#c4001e" stroke="#c08a8a" stroke-width="1"/>
<rect x="708.5" y="556.5" width="9" height="9" fill="#0000b4" stroke="#8080b0" stroke-width="1"/>
<rect x="688.5" y="557.5" width="9" height="9" fill="#c4001e" stroke="#c08a8a" stroke-width="1"/>
<rect x="695.5" y="566.5" width="9" height="9" fill="#0000b4" stroke="#8080b0" stroke-width="1"/>
<rect x="683.5" y="579.5" width="9" height="9" fill="#0000b4" stroke="#8080b0" stroke-width="1"/>
<rect x="681.5" y="568.5" width="9" height="9" fill="#0000b4" stroke="#8080b0" stroke-width="1"/>
<rect x="675.5" y="572.5" width="9" height="9" fill="#0000b4" stroke="#8080b0" stroke-width="1"/>
<rect x="673.5" y="562.5" width="9" height="9" fill="#0000b4" stroke="#8080b0" stroke-width="1"/>
<rect x="662.5" y="572.5" width="9" height="9" fill="#c4001e" stroke="#c08a8a" stroke-width="1"/>
<rect x="666.5" y="583.5" width="9" height="9" fill="#0000b4" stroke="#8080b0" stroke-width="1"/>
<rect x="647.5" y="578.5" width="9" height="9" fill="#c4001e" stroke="#c08a8a" stroke-width="1"/>
<rect x="651.5" y="589.5" width="9" height="9" fill="#0000b4" stroke="#8080b0" stroke-width="1"/>
<rect x="633.5" y="582.5" width="9" height="9" fill="#c4001e" stroke="#c08a8a" stroke-width="1"/>
<rect x="635.5" y="593.5" width="9" height="9" fill="#0000b4" stroke="#8080b0" stroke-width="1"/>
<rect x="617.5" y="584.5" width="9" height="9" fill="#c4001e" stroke="#c08a8a" stroke-width="1"/>
<rect x="619.5" y="595.5" width="9" height="9" fill="#0000b4" stroke="#8080b0" stroke-width="1"/>
<rect x="602.5" y="600.5" width="9" height="9" fill="#0000b4" stroke="#8080b0" stroke-width="1"/>
<rect x="606.5" y="591.5" width="9" height="9" fill="#0000b4" stroke="#8080b0" stroke-width="1"/>
<rect x="598.5" y="591.5" width="9" height="9" fill="#0000b4" stroke="#8080b0" stroke-width="1"/>
<rect x="602.5" y="581.5" width="9" height="9" fill="#0000b4" stroke="#8080b0" stroke-width="1"/>
<rect x="587.5" y="584.5" width="9" height="9" fill="#c4001e" stroke="#c08a8a" stroke-width="1"/>
<rect x="585.5" y="595.5" width="9" height="9" fill="#0000b4" stroke="#8080b0" stroke-width="1"/>
<rect x="571.5" y="582.5" width="9" height="9" fill="#c4001e" stroke="#c08a8a" stroke-width="1"/>
<rect x="569.5" y="593.5" width="9" height="9" fill="#0000b4" stroke="#8080b0" stroke-width="1"/>
<rect x="557.5" y="578.5" width="9" height="9" fill="#c4001e" stroke="#c08a8a" stroke-width="1"/>
<rect x="553.5" y="589.5" width="9" height="9" fill="#0000b4" stroke="#8080b0" stroke-width="1"/>
<rect x="542.5" y="572.5" width="9" height="9" fill="#c4001e" stroke="#c08a8a" stroke-width="1"/>
<rect x="538.5" y="583.5" width="9" height="9" fill="#0000b4" stroke="#8080b0" stroke-width="1"/>
<rect x="521.5" y="579.5" width="9" height="9" fill="#0000b4" stroke="#8080b0" stroke-width="1"/>
<rect x="529.5" y="572.5" width="9" height="9" fill="#0000b4" stroke="#8080b0" stroke-width="1"/>
<rect x="523.5" y="568.5" width="9" height="9" fill="#0000b4" stroke="#8080b0" stroke-width="1"/>
<rect x="531.5" y="562.5" width="9" height="9" fill="#0000b4" stroke="#8080b0" stroke-width="1"/>
<rect x="516.5" y="557.5" width="9" height="9" fill="#c4001e" stroke="#c08a8a" stroke-width="1"/>
<rect x="509.5" y="566.5" width="9" height="9" fill="#0000b4" stroke="#8080b0" stroke-width="1"/>
<rect x="504.5" y="547.5" width="9" height="9" fill="#c4001e" stroke="#c08a8a" stroke-width="1"/>
<rect x="496.5" y="556.5" width="9" height="9" fill="#0000b4" stroke="#8080b0" stroke-width="1"/>
<rect x="493.5" y="537.5" width="9" height="9" fill="#c4001e" stroke="#c08a8a" stroke-width="1"/>
<rect x="485.5" y="544.5" width="9" height="9" fill="#0000b4" stroke="#8080b0" stroke-width="1"/>
<rect x="483.5" y="525.5" width="9" height="9" fill="#c4001e" stroke="#c08a8a" stroke-width="1"/>
<rect x="474.5" y="531.5" width="9" height="9" fill="#0000b4" stroke="#8080b0" stroke-width="1"/>
<rect x="462.5" y="519.5" width="9" height="9" fill="#0000b4" stroke="#8080b0" stroke-width="1"/>
<rect x="472.5" y="518.5" width="9" height="9" fill="#0000b4" stroke="#8080b0" stroke-width="1"/>
<rect x="468.5" y="511.5" width="9" height="9" fill="#0000b4" stroke="#8080b0" stroke-width="1"/>
<rect x="478.5" y="510.5" width="9" height="9" fill="#0000b4" stroke="#8080b0" stroke-width="1"/>
<rect x="468.5" y="498.5" width="9" height="9" fill="#c4001e" stroke="#c08a8a" stroke-width="1"/>
<rect x="458.5" y="503.5" width="9" height="9" fill="#0000b4" stroke="#8080b0" stroke-width="1"/>
<rect x="462.5" y="484.5" width="9" height="9" fill="#c4001e" stroke="#c08a8a" stroke-width="1"/>
<rect x="452.5" y="487.5" width="9" height="9" fill="#0000b4" stroke="#8080b0" stroke-width="1"/>
<rect x="458.5" y="469.5" width="9" height="9" fill="#c4001e" stroke="#c08a8a" stroke-width="1"/>
<rect x="447.5" y="471.5" width="9" height="9" fill="#0000b4" stroke="#8080b0" stroke-width="1"/>
<rect x="456.5" y="454.5" width="9" height="9" fill="#c4001e" stroke="#c08a8a" stroke-width="1"/>
<rect x="445.5" y="455.5" width="9" height="9" fill="#0000b4" stroke="#8080b0" stroke-width="1"/>
<rect x="440.5" y="438.5" width="9" height="9" fill="#0000b4" stroke="#8080b0" stroke-width="1"/>
<rect x="450.5" y="442.5" width="9" height="9" fill="#0000b4" stroke="#8080b0" stroke-width="1"/>
<rect x="450.5" y="434.5" width="9" height="9" fill="#0000b4" stroke="#8080b0" stroke-width="1"/>
<rect x="459.5" y="438.5" width="9" height="9" fill="#0000b4" stroke="#8080b0" stroke-width="1"/>
<rect x="456.5" y="423.5" width="9" height="9" fill="#c4001e" stroke="#c08a8a" stroke-width="1"/>
<rect x="445.5" y="422.5" width="9" height="9" fill="#0000b4" stroke="#8080b0" stroke-width="1"/>
<rect x="458.5" y="408.5" width="9" height="9" fill="#c4001e" stroke="#c08a8a" stroke-width="1"/>
<rect x="447.5" y="405.5" width="9" height="9" fill="#0000b4" stroke="#8080b0" stroke-width="1"/>
<rect x="462.5" y="393.5" width="9" height="9" fill="#c4001e" stroke="#c08a8a" stroke-width="1"/>
<rect x="452.5" y="389.5" width="9" height="9" fill="#0000b4" stroke="#8080b0" stroke-width="1"/>
<rect x="468.5" y="379.5" width="9" height="9" fill="#c4001e" stroke="#c08a8a" stroke-width="1"/>
<rect x="458.5" y="374.5" width="9" height="9" fill="#0000b4" stroke="#8080b0" stroke-width="1"/>
<rect x="462.5" y="357.5" width="9" height="9" fill="#0000b4" stroke="#8080b0" stroke-width="1"/>
<rect x="468.5" y="365.5" width="9" height="9" fill="#0000b4" stroke="#8080b0" stroke-width="1"/>
<rect x="472.5" y="359.5" width="9" height="9" fill="#0000b4" stroke="#8080b0" stroke-width="1"/>
<rect x="478.5" y="367.5" width="9" height="9" fill="#0000b4" stroke="#8080b0" stroke-width="1"/>
<rect x="483.5" y="352.5" width="9" height="9" fill="#c4001e" stroke="#c08a8a" stroke-width="1"/>
<rect x="474.5" y="345.5" width="9" height="9" fill="#0000b4" stroke="#8080b0" stroke-width="1"/>
<rect x="493.5" y="340.5" width="9" height="9" fill="#c4001e" stroke="#c08a8a" stroke-width="1"/>
<rect x="485.5" y="333.5" width="9" height="9" fill="#0000b4" stroke="#8080b0" stroke-width="1"/>
<rect x="504.5" y="329.5" width="9" height="9" fill="#c4001e" stroke="#c08a8a" stroke-width="1"/>
<rect x="496.5" y="321.5" width="9" height="9" fill="#0000b4" stroke="#8080b0" stroke-width="1"/>
<rect x="516.5" y="319.5" width="9" height="9" fill="#c4001e" stroke="#c08a8a" stroke-width="1"/>
<rect x="509.5" y="310.5" width="9" height="9" fill="#0000b4" stroke="#8080b0" stroke-width="1"/>
<rect x="521.5" y="298.5" width="9" height="9" fill="#0000b4" stroke="#8080b0" stroke-width="1"/>
<rect x="523.5" y="308.5" width="9" height="9" fill="#0000b4" stroke="#8080b0" stroke-width="1"/>
<rect x="529.5" y="305.5" width="9" height="9" fill="#0000b4" stroke="#8080b0" stroke-width="1"/>
<rect x="531.5" y="315.5" width="9" height="9" fill="#0000b4" stroke="#8080b0" stroke-width="1"/>
<rect x="542.5" y="304.5" width="9" height="9" fill="#c4001e" stroke="#c08a8a" stroke-width="1"/>
<rect x="538.5" y="294.5" width="9" height="9" fill="#0000b4" stroke="#8080b0" stroke-width="1"/>
<rect x="557.5" y="299.5" width="9" height="9" fill="#c4001e" stroke="#c08a8a" stroke-width="1"/>
<rect x="553.5" y="288.5" width="9" height="9" fill="#0000b4" stroke="#8080b0" stroke-width="1"/>
<rect x="571.5" y="295.5" width="9" height="9" fill="#c4001e" stroke="#c08a8a" stroke-width="1"/>
<rect x="569.5" y="284.5" width="9" height="9" fill="#0000b4" stroke="#8080b0" stroke-width="1"/>
<rect x="587.5" y="292.5" width="9" height="9" fill="#c4001e" stroke="#c08a8a" stroke-width="1"/>
<rect x="585.5" y="281.5" width="9" height="9" fill="#0000b4" stroke="#8080b0" stroke-width="1"/>
<rect x="663.5" y="332.5" width="9" height="9" fill="#0000b4" stroke="#8080b0" stroke-width="1"/>
<rect x="708.5" y="377.5" width="9" height="9" fill="#0000b4" stroke="#8080b0" stroke-width="1"/>
<rect x="724.5" y="438.5" width="9" height="9" fill="#0000b4" stroke="#8080b0" stroke-width="1"/>
<rect x="708.5" y="499.5" width="9" height="9" fill="#0000b4" stroke="#8080b0" stroke-width="1"/>
<rect x="663.5" y="544.5" width="9" height="9" fill="#0000b4" stroke="#8080b0" stroke-width="1"/>
<rect x="602.5" y="560.5" width="9" height="9" fill="#0000b4" stroke="#8080b0" stroke-width="1"/>
<rect x="541.5" y="544.5" width="9" height="9" fill="#0000b4" stroke="#8080b0" stroke-width="1"/>
<rect x="496.5" y="499.5" width="9" height="9" fill="#0000b4" stroke="#8080b0" stroke-width="1"/>
<rect x="480.5" y="438.5" width="9" height="9" fill="#0000b4" stroke="#8080b0" stroke-width="1"/>
<rect x="496.5" y="377.5" width="9" height="9" fill="#0000b4" stroke="#8080b0" stroke-width="1"/>
<rect x="541.5" y="332.5" width="9" height="9" fill="#0000b4" stroke="#8080b0" stroke-width="1"/>
<rect x="602.5" y="316.5" width="9" height="9" fill="#0000b4" stroke="#8080b0" stroke-width="1"/>
<rect x="595.5" y="371.5" width="9" height="9" fill="#0000b4" stroke="#8080b0" stroke-width="1"/>
<rect x="602.5" y="371.5" width="9" height="9" fill="#0000b4" stroke="#8080b0" stroke-width="1"/>
<rect x="609.5" y="371.5" width="9" height="9" fill="#0000b4" stroke="#8080b0" stroke-width="1"/>
<rect x="589.5" y="372.5" width="9" height="9" fill="#0000b4" stroke="#8080b0" stroke-width="1"/>
<rect x="615.5" y="372.5" width="9" height="9" fill="#0000b4" stroke="#8080b0" stroke-width="1"/>
<rect x="582.5" y="374.5" width="9" height="9" fill="#0000b4" stroke="#8080b0" stroke-width="1"/>
<rect x="622.5" y="374.5" width="9" height="9" fill="#0000b4" stroke="#8080b0" stroke-width="1"/>
<rect x="576.5" y="376.5" width="9" height="9" fill="#0000b4" stroke="#8080b0" stroke-width="1"/>
<rect x="628.5" y="376.5" width="9" height="9" fill="#0000b4" stroke="#8080b0" stroke-width="1"/>
<rect x="570.5" y="379.5" width="9" height="9" fill="#0000b4" stroke="#8080b0" stroke-width="1"/>
<rect x="634.5" y="379.5" width="9" height="9" fill="#0000b4" stroke="#8080b0" stroke-width="1"/>
<rect x="564.5" y="382.5" width="9" height="9" fill="#0000b4" stroke="#8080b0" stroke-width="1"/>
<rect x="640.5" y="382.5" width="9" height="9" fill="#0000b4" stroke="#8080b0" stroke-width="1"/>
<rect x="559.5" y="386.5" width="9" height="9" fill="#0000b4" stroke="#8080b0" stroke-width="1"/>
<rect x="645.5" y="386.5" width="9" height="9" fill="#0000b4" stroke="#8080b0" stroke-width="1"/>
<rect x="554.5" y="390.5" width="9" height="9" fill="#0000b4" stroke="#8080b0" stroke-width="1"/>
<rect x="650.5" y="390.5" width="9" height="9" fill="#0000b4" stroke="#8080b0" stroke-width="1"/>
<rect x="550.5" y="395.5" width="9" height="9" fill="#0000b4" stroke="#8080b0" stroke-width="1"/>
<rect x="654.5" y="395.5" width="9" height="9" fill="#0000b4" stroke="#8080b0" stroke-width="1"/>
<rect x="546.5" y="401.5" width="9" height="9" fill="#0000b4" stroke="#8080b0" stroke-width="1"/>
<rect x="658.5" y="401.5" width="9" height="9" fill="#0000b4" stroke="#8080b0" stroke-width="1"/>
<rect x="542.5" y="406.5" width="9" height="9" fill="#0000b4" stroke="#8080b0" stroke-width="1"/>
<rect x="662.5" y="406.5" width="9" height="9" fill="#0000b4" stroke="#8080b0" stroke-width="1"/>
<rect x="539.5" y="412.5" width="9" height="9" fill="#0000b4" stroke="#8080b0" stroke-width="1"/>
<rect x="665.5" y="412.5" width="9" height="9" fill="#0000b4" stroke="#8080b0" stroke-width="1"/>
<rect x="537.5" y="419.5" width="9" height="9" fill="#0000b4" stroke="#8080b0" stroke-width="1"/>
<rect x="667.5" y="419.5" width="9" height="9" fill="#0000b4" stroke="#8080b0" stroke-width="1"/>
<rect x="536.5" y="425.5" width="9" height="9" fill="#0000b4" stroke="#8080b0" stroke-width="1"/>
<rect x="668.5" y="425.5" width="9" height="9" fill="#0000b4" stroke="#8080b0" stroke-width="1"/>
<rect x="535.5" y="432.5" width="9" height="9" fill="#0000b4" stroke="#8080b0" stroke-width="1"/>
<rect x="669.5" y="432.5" width="9" height="9" fill="#0000b4" stroke="#8080b0" stroke-width="1"/>
<rect x="534.5" y="438.5" width="9" height="9" fill="#0000b4" stroke="#8080b0" stroke-width="1"/>
<rect x="670.5" y="438.5" width="9" height="9" fill="#0000b4" stroke="#8080b0" stroke-width="1"/>
<rect x="535.5" y="445.5" width="9" height="9" fill="#0000b4" stroke="#8080b0" stroke-width="1"/>
<rect x="669.5" y="445.5" width="9" height="9" fill="#0000b4" stroke="#8080b0" stroke-width="1"/>
<rect x="536.5" y="452.5" width="9" height="9" fill="#0000b4" stroke="#8080b0" stroke-width="1"/>
<rect x="668.5" y="452.5" width="9" height="9" fill="#0000b4" stroke="#8080b0" stroke-width="1"/>
<rect x="537.5" y="458.5" width="9" height="9" fill="#0000b4" stroke="#8080b0" stroke-width="1"/>
<rect x="667.5" y="458.5" width="9" height="9" fill="#0000b4" stroke="#8080b0" stroke-width="1"/>
<rect x="539.5" y="464.5" width="9" height="9" fill="#0000b4" stroke="#8080b0" stroke-width="1"/>
<rect x="665.5" y="464.5" width="9" height="9" fill="#0000b4" stroke="#8080b0" stroke-width="1"/>
<rect x="542.5" y="470.5" width="9" height="9" fill="#0000b4" stroke="#8080b0" stroke-width="1"/>
<rect x="662.5" y="470.5" width="9" height="9" fill="#0000b4" stroke="#8080b0" stroke-width="1"/>
<rect x="546.5" y="476.5" width="9" height="9" fill="#0000b4" stroke="#8080b0" stroke-width="1"/>
<rect x="658.5" y="476.5" width="9" height="9" fill="#0000b4" stroke="#8080b0" stroke-width="1"/>
<rect x="550.5" y="481.5" width="9" height="9" fill="#0000b4" stroke="#8080b0" stroke-width="1"/>
<rect x="654.5" y="481.5" width="9" height="9" fill="#0000b4" stroke="#8080b0" stroke-width="1"/>
<rect x="554.5" y="486.5" width="9" height="9" fill="#0000b4" stroke="#8080b0" stroke-width="1"/>
<rect x="650.5" y="486.5" width="9" height="9" fill="#0000b4" stroke="#8080b0" stroke-width="1"/>
<rect x="559.5" y="491.5" width="9" height="9" fill="#0000b4" stroke="#8080b0" stroke-width="1"/>
<rect x="645.5" y="491.5" width="9" height="9" fill="#0000b4" stroke="#8080b0" stroke-width="1"/>
<rect x="564.5" y="495.5" width="9" height="9" fill="#0000b4" stroke="#8080b0" stroke-width="1"/>
<rect x="640.5" y="495.5" width="9" height="9" fill="#0000b4" stroke="#8080b0" stroke-width="1"/>
<rect x="570.5" y="498.5" width="9" height="9" fill="#0000b4" stroke="#8080b0" stroke-width="1"/>
<rect x="634.5" y="498.5" width="9" height="9" fill="#0000b4" stroke="#8080b0" stroke-width="1"/>
<rect x="576.5" y="501.5" width="9" height="9" fill="#0000b4" stroke="#8080b0" stroke-width="1"/>
<rect x="628.5" y="501.5" width="9" height="9" fill="#0000b4" stroke="#8080b0" stroke-width="1"/>
<rect x="582.5" y="503.5" width="9" height="9" fill="#0000b4" stroke="#8080b0" stroke-width="1"/>
<rect x="622.5" y="503.5" width="9" height="9" fill="#0000b4" stroke="#8080b0" stroke-width="1"/>
<rect x="589.5" y="505.5" width="9" height="9" fill="#0000b4" stroke="#8080b0" stroke-width="1"/>
<rect x="615.5" y="505.5" width="9" height="9" fill="#0000b4" stroke="#8080b0" stroke-width="1"/>
<rect x="595.5" y="506.5" width="9" height="9" fill="#0000b4" stroke="#8080b0" stroke-width="1"/>
<rect x="602.5" y="506.5" width="9" height="9" fill="#0000b4" stroke="#8080b0" stroke-width="1"/>
<rect x="609.5" y="506.5" width="9" height="9" fill="#0000b4" stroke="#8080b0" stroke-width="1"/>
<rect x="596.5" y="382.5" width="9" height="9" fill="#c4001e" stroke="#c08a8a" stroke-width="1"/>
<rect x="602.5" y="382.5" width="9" height="9" fill="#c4001e" stroke="#c08a8a" stroke-width="1"/>
<rect x="608.5" y="382.5" width="9" height="9" fill="#c4001e" stroke="#c08a8a" stroke-width="1"/>
<rect x="591.5" y="383.5" width="9" height="9" fill="#c4001e" stroke="#c08a8a" stroke-width="1"/>
<rect x="613.5" y="383.5" width="9" height="9" fill="#c4001e" stroke="#c08a8a" stroke-width="1"/>
<rect x="586.5" y="384.5" width="9" height="9" fill="#c4001e" stroke="#c08a8a" stroke-width="1"/>
<rect x="618.5" y="384.5" width="9" height="9" fill="#c4001e" stroke="#c08a8a" stroke-width="1"/>
<rect x="580.5" y="386.5" width="9" height="9" fill="#c4001e" stroke="#c08a8a" stroke-width="1"/>
<rect x="624.5" y="386.5" width="9" height="9" fill="#c4001e" stroke="#c08a8a" stroke-width="1"/>
<rect x="575.5" y="388.5" width="9" height="9" fill="#c4001e" stroke="#c08a8a" stroke-width="1"/>
<rect x="629.5" y="388.5" width="9" height="9" fill="#c4001e" stroke="#c08a8a" stroke-width="1"/>
<rect x="571.5" y="391.5" width="9" height="9" fill="#c4001e" stroke="#c08a8a" stroke-width="1"/>
<rect x="633.5" y="391.5" width="9" height="9" fill="#c4001e" stroke="#c08a8a" stroke-width="1"/>
<rect x="566.5" y="395.5" width="9" height="9" fill="#c4001e" stroke="#c08a8a" stroke-width="1"/>
<rect x="638.5" y="395.5" width="9" height="9" fill="#c4001e" stroke="#c08a8a" stroke-width="1"/>
<rect x="562.5" y="398.5" width="9" height="9" fill="#c4001e" stroke="#c08a8a" stroke-width="1"/>
<rect x="642.5" y="398.5" width="9" height="9" fill="#c4001e" stroke="#c08a8a" stroke-width="1"/>
<rect x="558.5" y="402.5" width="9" height="9" fill="#c4001e" stroke="#c08a8a" stroke-width="1"/>
<rect x="646.5" y="402.5" width="9" height="9" fill="#c4001e" stroke="#c08a8a" stroke-width="1"/>
<rect x="555.5" y="407.5" width="9" height="9" fill="#c4001e" stroke="#c08a8a" stroke-width="1"/>
<rect x="649.5" y="407.5" width="9" height="9" fill="#c4001e" stroke="#c08a8a" stroke-width="1"/>
<rect x="552.5" y="412.5" width="9" height="9" fill="#c4001e" stroke="#c08a8a" stroke-width="1"/>
<rect x="652.5" y="412.5" width="9" height="9" fill="#c4001e" stroke="#c08a8a" stroke-width="1"/>
<rect x="550.5" y="417.5" width="9" height="9" fill="#c4001e" stroke="#c08a8a" stroke-width="1"/>
<rect x="654.5" y="417.5" width="9" height="9" fill="#c4001e" stroke="#c08a8a" stroke-width="1"/>
<rect x="548.5" y="422.5" width="9" height="9" fill="#c4001e" stroke="#c08a8a" stroke-width="1"/>
<rect x="656.5" y="422.5" width="9" height="9" fill="#c4001e" stroke="#c08a8a" stroke-width="1"/>
<rect x="547.5" y="427.5" width="9" height="9" fill="#c4001e" stroke="#c08a8a" stroke-width="1"/>
<rect x="657.5" y="427.5" width="9" height="9" fill="#c4001e" stroke="#c08a8a" stroke-width="1"/>
<rect x="546.5" y="433.5" width="9" height="9" fill="#c4001e" stroke="#c08a8a" stroke-width="1"/>
<rect x="658.5" y="433.5" width="9" height="9" fill="#c4001e" stroke="#c08a8a" stroke-width="1"/>
<rect x="546.5" y="438.5" width="9" height="9" fill="#c4001e" stroke="#c08a8a" stroke-width="1"/>
<rect x="658.5" y="438.5" width="9" height="9" fill="#c4001e" stroke="#c08a8a" stroke-width="1"/>
<rect x="546.5" y="444.5" width="9" height="9" fill="#c4001e" stroke="#c08a8a" stroke-width="1"/>
<rect x="658.5" y="444.5" width="9" height="9" fill="#c4001e" stroke="#c08a8a" stroke-width="1"/>
<rect x="547.5" y="449.5" width="9" height="9" fill="#c4001e" stroke="#c08a8a" stroke-width="1"/>
<rect x="657.5" y="449.5" width="9" height="9" fill="#c4001e" stroke="#c08a8a" stroke-width="1"/>
<rect x="548.5" y="455.5" width="9" height="9" fill="#c4001e" stroke="#c08a8a" stroke-width="1"/>
<rect x="656.5" y="455.5" width="9" height="9" fill="#c4001e" stroke="#c08a8a" stroke-width="1"/>
<rect x="550.5" y="460.5" width="9" height="9" fill="#c4001e" stroke="#c08a8a" stroke-width="1"/>
<rect x="654.5" y="460.5" width="9" height="9" fill="#c4001e" stroke="#c08a8a" stroke-width="1"/>
<rect x="552.5" y="465.5" width="9" height="9" fill="#c4001e" stroke="#c08a8a" stroke-width="1"/>
<rect x="652.5" y="465.5" width="9" height="9" fill="#c4001e" stroke="#c08a8a" stroke-width="1"/>
<rect x="555.5" y="470.5" width="9" height="9" fill="#c4001e" stroke="#c08a8a" stroke-width="1"/>
<rect x="649.5" y="470.5" width="9" height="9" fill="#c4001e" stroke="#c08a8a" stroke-width="1"/>
<rect x="558.5" y="474.5" width="9" height="9" fill="#c4001e" stroke="#c08a8a" stroke-width="1"/>
<rect x="646.5" y="474.5" width="9" height="9" fill="#c4001e" stroke="#c08a8a" stroke-width="1"/>
<rect x="562.5" y="478.5" width="9" height="9" fill="#c4001e" stroke="#c08a8a" stroke-width="1"/>
<rect x="642.5" y="478.5" width="9" height="9" fill="#c4001e" stroke="#c08a8a" stroke-width="1"/>
<rect x="566.5" y="482.5" width="9" height="9" fill="#c4001e" stroke="#c08a8a" stroke-width="1"/>
<rect x="638.5" y="482.5" width="9" height="9" fill="#c4001e" stroke="#c08a8a" stroke-width="1"/>
<rect x="571.5" y="485.5" width="9" height="9" fill="#c4001e" stroke="#c08a8a" stroke-width="1"/>
<rect x="633.5" y="485.5" width="9" height="9" fill="#c4001e" stroke="#c08a8a" stroke-width="1"/>
<rect x="575.5" y="488.5" width="9" height="9" fill="#c4001e" stroke="#c08a8a" stroke-width="1"/>
<rect x="629.5" y="488.5" width="9" height="9" fill="#c4001e" stroke="#c08a8a" stroke-width="1"/>
<rect x="580.5" y="490.5" width="9" height="9" fill="#c4001e" stroke="#c08a8a" stroke-width="1"/>
<rect x="624.5" y="490.5" width="9" height="9" fill="#c4001e" stroke="#c08a8a" stroke-width="1"/>
<rect x="586.5" y="492.5" width="9" height="9" fill="#c4001e" stroke="#c08a8a" stroke-width="1"/>
<rect x="618.5" y="492.5" width="9" height="9" fill="#c4001e" stroke="#c08a8a" stroke-width="1"/>
<rect x="591.5" y="494.5" width="9" height="9" fill="#c4001e" stroke="#c08a8a" stroke-width="1"/>
<rect x="613.5" y="494.5" width="9" height="9" fill="#c4001e" stroke="#c08a8a" stroke-width="1"/>
<rect x="596.5" y="495.5" width="9" height="9" fill="#c4001e" stroke="#c08a8a" stroke-width="1"/>
<rect x="602.5" y="495.5" width="9" height="9" fill="#c4001e" stroke="#c08a8a" stroke-width="1"/>
<rect x="608.5" y="495.5" width="9" height="9" fill="#c4001e" stroke="#c08a8a" stroke-width="1"/>
<rect x="607.5" y="438.5" width="9" height="9" fill="#0a84b4" stroke="#5fb0d4" stroke-width="1"/>
<rect x="602.5" y="433.5" width="9" height="9" fill="#0a84b4" stroke="#5fb0d4" stroke-width="1"/>
<rect x="597.5" y="438.5" width="9" height="9" fill="#0a84b4" stroke="#5fb0d4" stroke-width="1"/>
<rect x="602.5" y="443.5" width="9" height="9" fill="#0a84b4" stroke="#5fb0d4" stroke-width="1"/>
<path d="M398.3 631.5H438.3M418.3 611.5V651.5" stroke="#9a0000" stroke-width="1.2"/>
<circle cx="418.3" cy="631.5" r="5.2" stroke="#9a0000" stroke-width="1.2" fill="none"/>
</svg>
<div class="a" style="left:1119px;top:132px;width:14px;height:600px;background:#fafafa"></div>
<div class="a" style="left:1123px;top:303px;width:8px;height:280px;background:#000;border-radius:4px"></div>
<div class="a" style="left:72px;top:732px;width:23px;height:16px;background:#ececec"></div>
<div class="a" style="left:95px;top:732px;width:968px;height:16px;background:#f7f7f7"></div>
<div class="a" style="left:161px;top:736px;width:837px;height:8px;background:#808080;border-radius:4px"></div>
<div class="a" style="left:1063px;top:732px;width:71px;height:16px;background:#ececec;font-size:13px;text-align:right;line-height:17px;color:#111;padding-right:1px">10 &lt; 100</div>
<div class="a" style="left:72px;top:748px;width:1062px;height:2px;background:#c9c9c9"></div>
<div class="a" style="left:72px;top:750px;width:1062px;height:20px;background:#fff"></div>
<div class="a" style="left:77px;top:751px;font-size:13px;color:#1414d8;white-space:nowrap"><i>Command:</i> line</div>
<div class="a" style="left:1118px;top:750px;width:16px;height:20px;background:#fafafa;border-left:1px solid #ececec"></div>
<div class="a" style="left:1122px;top:750px;width:8px;height:17px;background:#7a7a7a;border-radius:4px"></div>
<div class="a" style="left:72px;top:770px;width:1062px;height:2px;background:#cdcdcd"></div>
<div class="a" style="left:72px;top:772px;width:1062px;height:25px;background:#ebebeb"></div>
<div class="a" style="left:73px;top:777px;font-size:13px;color:#111">Command:</div>
<div class="a" style="left:142px;top:776px;width:965px;height:18px;background:#fff"></div>
<div class="a" style="left:1107px;top:772px;width:26px;height:25px;background:#f6f6f6;border:1px solid #b4b4b4"></div>
<svg class="a" style="left:1112px;top:779px" width="16" height="12" viewBox="0 0 16 12"><rect x="1.5" y="1.5" width="13" height="9" fill="#f2f2f2" stroke="#333" stroke-width="1"/><rect x="1" y="1" width="14" height="3" fill="#111"/><rect x="11" y="2" width="1.2" height="1.2" fill="#fff"/></svg>
<!-- right gap with tabs -->
<div class="a" style="left:1133px;top:106px;width:22px;height:692px;background:linear-gradient(90deg,#ececec 11px,#e3e3e3 11px);border-top:1px solid #c6c6c6"></div>
<div class="a" style="left:1135px;top:354px;width:20px;height:114px;background:#1d83f5;border-radius:6px 0 0 6px"></div>
<div class="a" style="left:1145px;top:411px;width:0;height:0"><div style="position:absolute;left:-60px;top:-9px;width:120px;text-align:center;font-size:13.5px;color:#fff;transform:rotate(-90deg);white-space:nowrap">Property Editor</div></div>
<div class="a" style="left:1135px;top:474px;width:20px;height:80px;background:#d3d3d3;border-radius:6px 0 0 6px"></div>
<div class="a" style="left:1145px;top:514px;width:0;height:0"><div style="position:absolute;left:-60px;top:-9px;width:120px;text-align:center;font-size:13.5px;color:#222;transform:rotate(-90deg);white-space:nowrap">Layer List</div></div>
<!-- status bar -->
<div id="status" class="a" style="top:798px;height:46px"></div>
<div class="st" style="left:2px;top:807.5px">244.4775,14.2165</div>
<div class="st" style="left:2px;top:827.5px">@244.4775,14.2165</div>
<div class="a" style="left:254px;top:802px;width:1px;height:40px;background:#8e8e8e"></div>
<div class="st" style="left:256px;top:807.5px">244.8905&lt;3°</div>
<div class="st" style="left:256px;top:827.5px">@244.8905&lt;3°</div>
<div class="a" style="left:506px;top:818px;width:6px;height:6px;border-radius:3px;background:#c4c4c4"></div>
<div class="st" style="left:490px;top:811px;width:209px;text-align:right">Select entity or region</div>
<div class="st" style="left:490px;top:822px;width:209px;text-align:right">Move entity or reference</div>
<svg class="a" style="left:716px;top:805px" width="21" height="33" viewBox="0 0 21 33"><rect x="1.5" y="1.5" width="18" height="30" rx="9" fill="#fff" stroke="#222" stroke-width="1"/><path d="M1.5 13H19.5M10.5 1.5V13" stroke="#222" stroke-width=".9"/><rect x="8.5" y="4" width="4" height="7" rx="2" fill="#fff" stroke="#222" stroke-width=".9"/></svg>
<div class="a" style="left:939px;top:818px;width:6px;height:6px;border-radius:3px;background:#c4c4c4"></div>
<div class="st" style="left:949px;top:811.5px">Selected entities:</div>
<div class="st" style="left:949px;top:823.5px">149 Entities on Layer "0".</div>
<div class="a" style="left:1269px;top:818px;width:6px;height:6px;border-radius:3px;background:#c4c4c4"></div>
<div class="a" style="left:1155px;top:106px;width:300px;height:691px;background:#ececec;border-left:1px solid #d2d2d2;border-top:1px solid #c6c6c6"></div>
<div class="a" style="left:1156px;top:107px;width:298px;height:25px;background:linear-gradient(#ececec,#e4e4e4 60%,#dadada);border-top:1px solid #c8c8c8;border-bottom:2px solid #cbcbcb"></div>
<svg class="a" style="left:1156px;top:111px" width="34" height="15" viewBox="0 0 34 15"><circle cx="7.5" cy="7.5" r="6.5" fill="#6f6f6f"/><path d="M5 5L10 10M10 5L5 10" stroke="#fff" stroke-width="1.8"/><circle cx="25.7" cy="7.5" r="6.5" fill="#6f6f6f"/><rect x="22" y="6.5" width="5.5" height="4.5" fill="none" stroke="#fff" stroke-width="1.1"/><path d="M24 6.5V4.5H29.5V9H27.5" fill="none" stroke="#fff" stroke-width="1.1"/></svg>
<div class="a" style="left:1262px;top:112.5px;width:120px;text-align:center;font-size:12px;color:#262626;letter-spacing:.1px">Property Editor</div>
<div class="a" style="left:1440px;top:131px;width:14px;height:666px;background:#f3f3f3;border-left:1px solid #e0e0e0"></div>
<div class="a" style="left:1443px;top:133px;width:8px;height:594px;background:#7e7e7e;border-radius:4px"></div>
<div class="a" style="left:1168px;top:183px;width:259px;height:185px;background:#e3e3e3;border:1px solid #dadada;border-radius:6px"></div>
<div class="a" style="left:1168px;top:387px;width:259px;height:404px;background:#e3e3e3;border:1px solid #dadada;border-radius:6px"></div>
<div class="a" style="left:1175px;top:170px;font-size:11.5px;color:#222">General Properties</div>
<div class="a" style="left:1175px;top:374px;font-size:11.5px;color:#222">Specific Properties</div>
<div class="pe-lbl" style="left:1169px;text-align:left;top:146.7px;">Selection:</div>
<div class="combo" style="left:1237px;top:144px;width:189px;height:20px;line-height:20px">Text [12]<div class="cbtn" style="top:1.5px"><svg width="10" height="13" viewBox="0 0 10 13"><path d="M2 5L5 2L8 5M2 8L5 11L8 8" fill="none" stroke="#fff" stroke-width="1.4"/></svg></div></div>
<div class="pe-lbl" style="left:1108px;width:160px;top:198.5px;">Layer:</div>
<div class="combo" style="left:1272px;top:197px;width:116px;height:19px;line-height:19px"><span style="display:inline-block;width:15px;height:10px;border:1px solid #333;vertical-align:-1px;margin-right:6px;margin-left:1px"></span>0<div class="cbtn" style="top:1.0px"><svg width="10" height="13" viewBox="0 0 10 13"><path d="M2 5L5 2L8 5M2 8L5 11L8 8" fill="none" stroke="#fff" stroke-width="1.4"/></svg></div></div>
<div class="a" style="left:1392px;top:194px;width:25px;height:25px;border:1px solid #bdbdbd;background:#e8e8e8"><svg class="a" style="left:5px;top:6px" width="14" height="12" viewBox="0 0 14 12"><path d="M0 1.5H14M0 6H14M0 10.5H14" stroke="#555" stroke-width="1.4"/></svg></div>
<div class="pe-lbl" style="left:1108px;width:160px;top:224.4px;">Color:</div>
<div class="combo" style="left:1272px;top:222px;width:145px;height:20px;line-height:20px"><span style="display:inline-block;width:15px;height:10px;border:1px solid #333;vertical-align:-1px;margin-right:6px;margin-left:1px"></span>By Layer<div class="cbtn" style="top:1.5px"><svg width="10" height="13" viewBox="0 0 10 13"><path d="M2 5L5 2L8 5M2 8L5 11L8 8" fill="none" stroke="#fff" stroke-width="1.4"/></svg></div></div>
<div class="pe-lbl" style="left:1108px;width:160px;top:248.7px;">Lineweight:</div>
<div class="combo" style="left:1272px;top:246px;width:145px;height:21px;line-height:21px"><span style="display:inline-block;width:15px;height:1px;background:#333;vertical-align:4px;margin-right:6px;margin-left:1px"></span>By Layer<div class="cbtn" style="top:2.0px"><svg width="10" height="13" viewBox="0 0 10 13"><path d="M2 5L5 2L8 5M2 8L5 11L8 8" fill="none" stroke="#fff" stroke-width="1.4"/></svg></div></div>
<div class="pe-lbl" style="left:1108px;width:160px;top:272.2px;">Linetype:</div>
<div class="combo" style="left:1272px;top:270px;width:145px;height:20px;line-height:20px">By Layer<div class="cbtn" style="top:1.5px"><svg width="10" height="13" viewBox="0 0 10 13"><path d="M2 5L5 2L8 5M2 8L5 11L8 8" fill="none" stroke="#fff" stroke-width="1.4"/></svg></div></div>
<div class="pe-lbl" style="left:1108px;width:160px;top:295.5px;">Linetype Scale:</div>
<div class="field" style="left:1272px;top:294px;width:145px;height:19px;line-height:19px;color:#1a1a1a;background:#fff">1</div>
<div class="pe-lbl" style="left:1108px;width:160px;top:319.0px;">Draw Order:</div>
<div class="field" style="left:1272px;top:317px;width:145px;height:20px;line-height:20px;color:#1a1a1a;background:#fff">*VARIES*</div>
<div class="pe-lbl" style="left:1108px;width:160px;top:342.2px;">Handle:</div>
<div class="field" style="left:1272px;top:341px;width:145px;height:18px;line-height:18px;color:#b4b4b4;background:#fff">*VARIES*</div>
<div class="pe-lbl" style="left:1098px;width:160px;top:400.2px;">Simple:</div>
<div class="combo" style="left:1261px;top:398px;width:156px;height:21px;line-height:21px">No<div class="cbtn" style="top:2.0px"><svg width="10" height="13" viewBox="0 0 10 13"><path d="M2 5L5 2L8 5M2 8L5 11L8 8" fill="none" stroke="#fff" stroke-width="1.4"/></svg></div></div>
<div class="pe-lbl" style="left:1098px;width:160px;top:423.8px;">Text:</div>
<div class="field" style="left:1261px;top:422px;width:156px;height:20px;line-height:20px;color:#1a1a1a;background:#fff">*VARIES*</div>
<div class="pe-lbl" style="left:1098px;width:160px;top:446.9px;">Plain Text:</div>
<div class="field" style="left:1261px;top:445px;width:156px;height:20px;line-height:20px;color:#b4b4b4;background:#fff">*VARIES*</div>
<div class="pe-lbl" style="left:1098px;width:160px;top:470.0px;">Font Name:</div>
<div class="combo" style="left:1261px;top:468px;width:156px;height:20px;line-height:20px">Arial<div class="cbtn" style="top:1.5px"><svg width="10" height="13" viewBox="0 0 10 13"><path d="M2 5L5 2L8 5M2 8L5 11L8 8" fill="none" stroke="#fff" stroke-width="1.4"/></svg></div></div>
<div class="pe-lbl" style="left:1098px;width:160px;top:493.7px;">Text Height:</div>
<div class="field" style="left:1261px;top:491px;width:156px;height:21px;line-height:21px;color:#1a1a1a;background:#fcd3d3">12</div>
<div class="pe-lbl" style="left:1098px;width:160px;top:517.8px;">Text Width:</div>
<div class="field" style="left:1261px;top:516px;width:156px;height:20px;line-height:20px;color:#1a1a1a;background:#fff">0</div>
<div class="pe-lbl" style="left:1098px;width:160px;top:539.7px;">Text Angle:</div>
<div class="field" style="left:1261px;top:538px;width:156px;height:19px;line-height:19px;color:#1a1a1a;background:#fff">0</div>
<div class="pe-lbl" style="left:1098px;width:160px;top:562.8px;">X Scale:</div>
<div class="field" style="left:1261px;top:561px;width:156px;height:19px;line-height:19px;color:#1a1a1a;background:#fff">1</div>
<div class="pe-lbl" style="left:1098px;width:160px;top:586.8px;">Bold:</div>
<div class="combo" style="left:1261px;top:584px;width:156px;height:21px;line-height:21px">No<div class="cbtn" style="top:2.0px"><svg width="10" height="13" viewBox="0 0 10 13"><path d="M2 5L5 2L8 5M2 8L5 11L8 8" fill="none" stroke="#fff" stroke-width="1.4"/></svg></div></div>
<div class="pe-lbl" style="left:1098px;width:160px;top:610.2px;">Italic:</div>
<div class="combo" style="left:1261px;top:608px;width:156px;height:20px;line-height:20px">No<div class="cbtn" style="top:1.5px"><svg width="10" height="13" viewBox="0 0 10 13"><path d="M2 5L5 2L8 5M2 8L5 11L8 8" fill="none" stroke="#fff" stroke-width="1.4"/></svg></div></div>
<div class="pe-lbl" style="left:1098px;width:160px;top:633.8px;">Line Spacing:</div>
<div class="field" style="left:1261px;top:632px;width:156px;height:20px;line-height:20px;color:#1a1a1a;background:#fff">1</div>
<div class="pe-lbl" style="left:1177px;text-align:left;top:655.4px;font-weight:bold;">Text Position</div>
<div class="pe-lbl" style="left:1098px;width:160px;top:674.9px;">X:</div>
<div class="field" style="left:1261px;top:673px;width:156px;height:20px;line-height:20px;color:#1a1a1a;background:#fff">*VARIES*</div>
<div class="pe-lbl" style="left:1098px;width:160px;top:698.0px;">Y:</div>
<div class="field" style="left:1261px;top:696px;width:156px;height:20px;line-height:20px;color:#1a1a1a;background:#fff">*VARIES*</div>
<div class="pe-lbl" style="left:1177px;text-align:left;top:719.5px;font-weight:bold;">Alignment</div>
<div class="pe-lbl" style="left:1098px;width:160px;top:739.2px;">Horizontal:</div>
<div class="combo" style="left:1261px;top:737px;width:156px;height:21px;line-height:21px">Center<div class="cbtn" style="top:2.0px"><svg width="10" height="13" viewBox="0 0 10 13"><path d="M2 5L5 2L8 5M2 8L5 11L8 8" fill="none" stroke="#fff" stroke-width="1.4"/></svg></div></div>
<div class="pe-lbl" style="left:1098px;width:160px;top:763.2px;">Vertical:</div>
<div class="combo" style="left:1261px;top:760px;width:156px;height:22px;line-height:22px">Middle<div class="cbtn" style="top:2.5px"><svg width="10" height="13" viewBox="0 0 10 13"><path d="M2 5L5 2L8 5M2 8L5 11L8 8" fill="none" stroke="#fff" stroke-width="1.4"/></svg></div></div>
<div class="a" style="left:1252px;top:490px;width:174px;height:1.2px;background:rgba(236,80,80,.75)"></div>
<div class="a" style="left:1252px;top:511.5px;width:174px;height:1.2px;background:rgba(236,80,80,.75)"></div>
<div class="a" style="left:1259px;top:483px;width:1.2px;height:37px;background:rgba(236,80,80,.75)"></div>
<div class="a" style="left:1417.5px;top:483px;width:1.2px;height:37px;background:rgba(236,80,80,.75)"></div>
<svg class="a" style="left:1295px;top:457px" width="88" height="88" viewBox="0 0 88 88"><defs><radialGradient id="rg" cx=".5" cy=".5" r=".5"><stop offset=".72" stop-color="#9fb2cc" stop-opacity="0"/><stop offset=".8" stop-color="#a3b6cf" stop-opacity=".55"/><stop offset=".9" stop-color="#8aa0bf" stop-opacity=".8"/><stop offset="1" stop-color="#b8c6da" stop-opacity=".2"/></radialGradient></defs><circle cx="44" cy="44" r="40" fill="url(#rg)"/></svg>
<svg class="a" style="left:1338px;top:499px" width="18" height="28" viewBox="0 0 18 28"><path d="M2 1.5V21L6.5 16.5L10 24.5L13 23.2L9.6 15.5H16z" fill="#fff" stroke="#111" stroke-width="1.3" stroke-linejoin="round"/></svg>
<div class="a" style="left:1454px;top:106px;width:46px;height:691px;background:linear-gradient(90deg,#e2e2e2,#ececec 20%,#e6e6e6 70%,#cfcfcf);border-top:1px solid #c6c6c6"></div>
<div class="a" style="left:1463px;top:115px;width:28px;height:3px;background:radial-gradient(circle,#a8a8a8 1px,transparent 1.3px) 0 0/6px 3px"></div>
<div class="a" style="left:1456px;top:120px;width:44px;height:42px;background:#bababa;border-radius:6px 0 0 6px"></div>
<div class="a" style="left:1456px;top:268px;width:44px;height:44px;background:#bababa;border-radius:6px 0 0 6px"></div>
<div class="a" style="left:1456px;top:418px;width:44px;height:42px;background:#bababa;border-radius:6px 0 0 6px"></div>
<div class="a" style="left:1457px;top:261px;width:43px;height:1px;border-top:1px dotted #777"></div>
<div class="a" style="left:1457px;top:410px;width:43px;height:1px;border-top:1px dotted #777"></div>
<div class="dockic" style="left:1463px;top:127px"><svg class="a" style="left:-1px;top:-1px" width="28" height="28" viewBox="0 0 28 28"><path d="M5 12L15 8V22L5 26z" fill="#ddd" stroke="#333" stroke-width=".8"/><path d="M9 11L19 7V21L9 25z" fill="#eee" stroke="#333" stroke-width=".8"/><path d="M14 21L18 12L20 19z" fill="none" stroke="#e33" stroke-width="1"/></svg></div>
<div class="dockic" style="left:1463px;top:174px"><svg class="a" style="left:-1px;top:-1px" width="28" height="28" viewBox="0 0 28 28"><rect x="6" y="10" width="11" height="9" fill="#fbeebc" stroke="#333" stroke-width=".8"/><circle cx="17" cy="19" r="5.5" fill="#fbeebc" fill-opacity=".7" stroke="#333" stroke-width=".8"/></svg></div>
<div class="dockic" style="left:1463px;top:220px"><svg class="a" style="left:-1px;top:-1px" width="28" height="28" viewBox="0 0 28 28"><rect x="5" y="10" width="18" height="13" rx="2" fill="#f4f6fa" stroke="#b8c8e0" stroke-width="1"/></svg></div>
<div class="dockic" style="left:1463px;top:276px"><svg class="a" style="left:-1px;top:-1px" width="28" height="28" viewBox="0 0 28 28"><rect x="4" y="9" width="4" height="3" fill="#111"/><rect x="4" y="15" width="4" height="3" fill="#111"/><rect x="4" y="21" width="4" height="3" fill="#111"/><rect x="11" y="9" width="14" height="3" fill="none" stroke="#333" stroke-width=".8"/><rect x="11" y="15" width="14" height="3" fill="none" stroke="#333" stroke-width=".8"/><rect x="11" y="21" width="14" height="3" fill="none" stroke="#333" stroke-width=".8"/></svg></div>
<div class="dockic" style="left:1463px;top:323px"><svg class="a" style="left:-1px;top:-1px" width="28" height="28" viewBox="0 0 28 28"><path d="M7 10H21L15 17V24L13 23V17z" fill="#ccc" stroke="#444" stroke-width=".8"/></svg></div>
<div class="dockic" style="left:1463px;top:369px"><svg class="a" style="left:-1px;top:-1px" width="28" height="28" viewBox="0 0 28 28"><path d="M6 10L13 14V22L6 25z" fill="#fff" stroke="#333" stroke-width=".8"/><rect x="13" y="13" width="9" height="10" fill="#aaa" stroke="#444" stroke-width=".6"/><path d="M3 18H26" stroke="#e77" stroke-width=".8" stroke-dasharray="2 1"/></svg></div>
<div class="dockic" style="left:1463px;top:425px"><svg class="a" style="left:-1px;top:-1px" width="28" height="28" viewBox="0 0 28 28"><path d="M4 9H18M4 12H16M4 15H17M4 18H16" stroke="#888" stroke-width=".7"/><path d="M1 22H27" stroke="#333" stroke-width=".8"/></svg></div>
<div class="dockic" style="left:1463px;top:472px"><svg class="a" style="left:-1px;top:-1px" width="28" height="28" viewBox="0 0 28 28"><rect x="7" y="9" width="15" height="17" rx="1" fill="#c28a3c" stroke="#7a5a1c" stroke-width=".7"/><rect x="9" y="11" width="11" height="13" fill="#f5f5f5"/><rect x="11" y="7.5" width="7" height="3" fill="#888"/></svg></div>
</body></html>
